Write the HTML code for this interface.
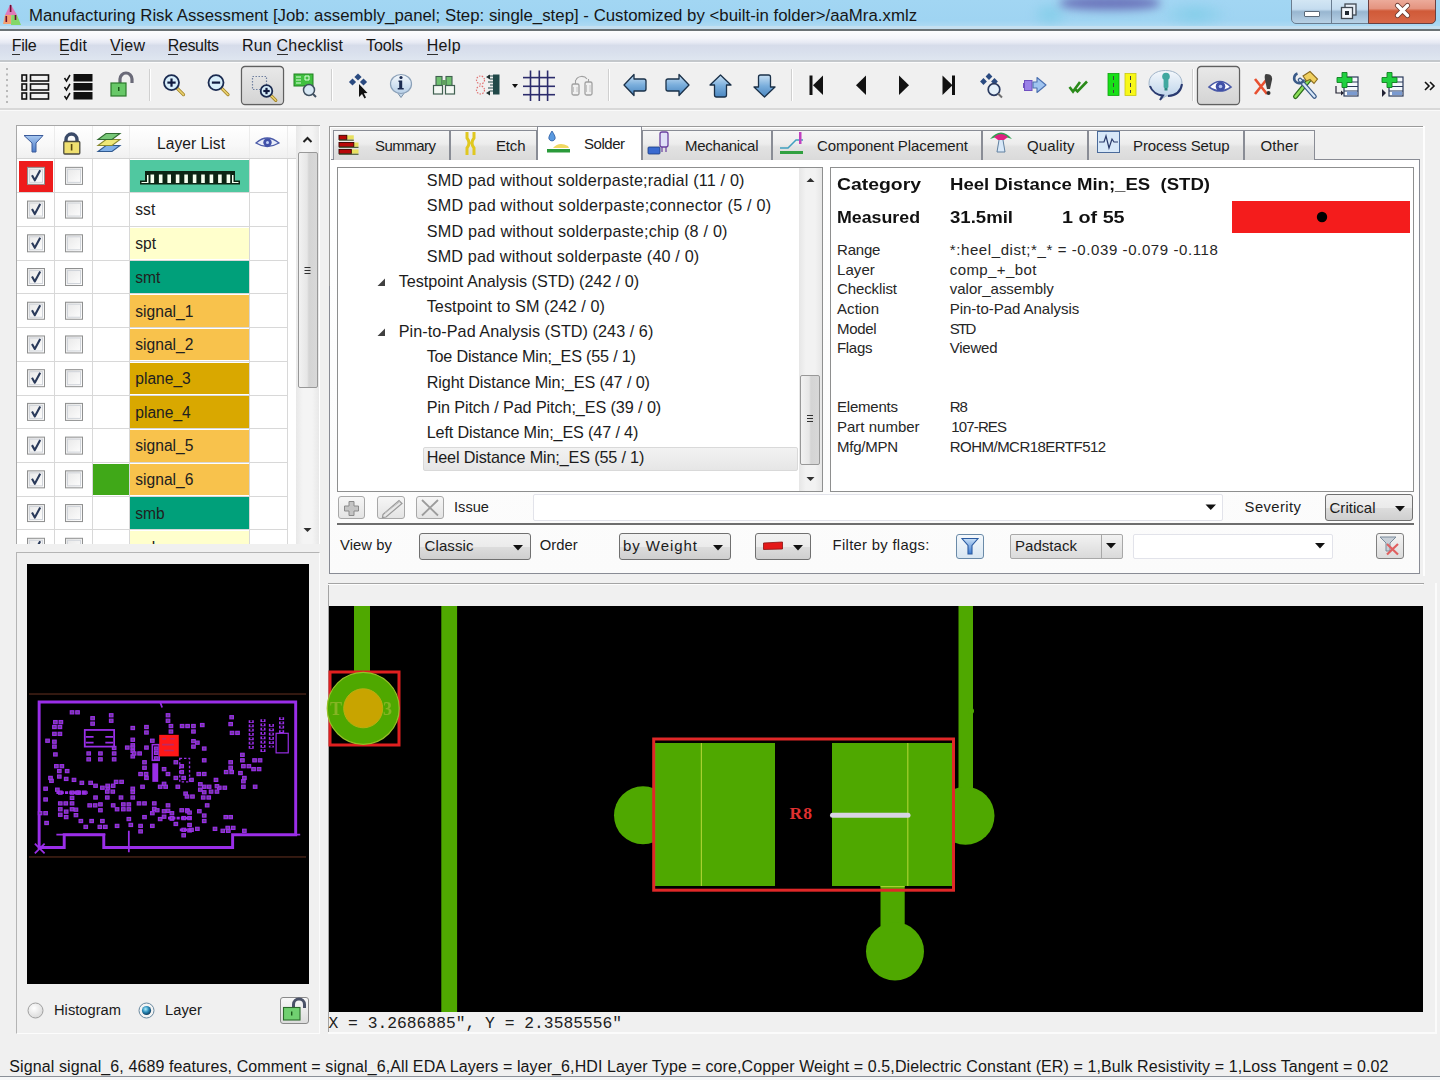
<!DOCTYPE html>
<html><head><meta charset="utf-8">
<style>
*{margin:0;padding:0;box-sizing:border-box}
html,body{width:1440px;height:1080px;overflow:hidden;background:#f0f0f0;font-family:"Liberation Sans",sans-serif;color:#1a1a1a;position:relative}
.a{position:absolute}
svg.a{overflow:visible}
.t{position:absolute;white-space:pre;line-height:1}
.u{text-decoration:underline;text-underline-offset:3px;text-decoration-thickness:1px}
</style></head><body>
<div class="a" style="left:0.0px;top:0.0px;width:1440.0px;height:29.0px;background:linear-gradient(180deg,#a2d6f3 0%,#9fd4f2 70%,#b4dcf3 100%)"></div>
<div class="a" style="left:1030.0px;top:0.0px;width:40.0px;height:29.0px;background:radial-gradient(ellipse at center,rgba(130,205,232,0.9) 0%,rgba(160,212,242,0) 70%);filter:blur(3px)"></div>
<div class="a" style="left:1160.0px;top:0.0px;width:70.0px;height:29.0px;background:radial-gradient(ellipse at center,rgba(130,205,232,0.9) 0%,rgba(160,212,242,0) 70%);filter:blur(3px)"></div>
<div class="a" style="left:1060.0px;top:-4.0px;width:100.0px;height:14.0px;background:#6a72ba;border-radius:40%;filter:blur(5px)"></div>
<div class="a" style="left:0.0px;top:26.0px;width:1440.0px;height:3.0px;background:#c4dff0"></div>
<div class="a" style="left:0.0px;top:29.0px;width:1440.0px;height:2.0px;background:#6b7275"></div>
<div class="t" style="left:29.0px;top:8.0px;font-size:16.8px;letter-spacing:0.017px;color:#161616;">Manufacturing Risk Assessment [Job: assembly_panel; Step: single_step] - Customized by &lt;built-in folder&gt;/aaMra.xmlz</div>
<svg class="a" style="left:0px;top:0px;" width="30" height="30" viewBox="0 0 30 30"><defs><filter id="blr"><feGaussianBlur stdDeviation="0.7"/></filter></defs><g filter="url(#blr)">
<path d="M10.5 4 L17 15 L5 15 Z" fill="#e07ab8"/>
<path d="M5 15 L11.5 15 L11 24 L3 24 Z" fill="#f4a070"/><path d="M11.5 15 L17 15 L21 25 L11 25 Z" fill="#84d868"/>
<path d="M10.6 5 L10.6 12 M6.3 16 L6.3 22 M15.5 15 L15.5 20" stroke="#6a1030" stroke-width="1.6"/></g></svg>
<div class="a" style="left:1291.0px;top:-3.0px;width:145.0px;height:27.0px;border:1px solid #6a7d90;border-radius:0 0 5px 5px;background:linear-gradient(180deg,#d6e8f5 0%,#c4dcef 45%,#98b6d0 55%,#b8d2e6 100%);"></div>
<div class="a" style="left:1368.0px;top:-3.0px;width:68.0px;height:27.0px;border:1px solid #6a4040;border-radius:0 0 5px 0;background:linear-gradient(180deg,#eeb0a0 0%,#e49480 42%,#d05a38 52%,#d86848 100%);"></div>
<div class="a" style="left:1331.0px;top:0.0px;width:1.0px;height:23.0px;background:#6a7d90"></div>
<div class="a" style="left:1304.0px;top:11.0px;width:16.0px;height:6.0px;background:#fff;border:1px solid #5a6878;border-radius:1px"></div>
<svg class="a" style="left:1340px;top:3px;" width="18" height="17" viewBox="0 0 18 17"><rect x="5" y="1" width="11" height="11" fill="#e8f0f8" stroke="#404850" stroke-width="1.3"/><rect x="1.5" y="4.5" width="11" height="11" fill="#f4f8fc" stroke="#404850" stroke-width="1.3"/><rect x="5" y="8" width="4" height="4" fill="#202830"/></svg>
<svg class="a" style="left:1394px;top:3px;" width="18" height="16" viewBox="0 0 18 16"><path d="M3.5 2.5 L13.5 12.5 M13.5 2.5 L3.5 12.5" stroke="#6a3a30" stroke-width="5.2" stroke-linecap="round"/><path d="M3.5 2.5 L13.5 12.5 M13.5 2.5 L3.5 12.5" stroke="#ffffff" stroke-width="3.4" stroke-linecap="round"/></svg>
<div class="a" style="left:0.0px;top:31.0px;width:1440.0px;height:29.0px;background:linear-gradient(180deg,#fdfdfe 0%,#f4f5fa 25%,#e6e9f3 40%,#d6dcea 50%,#d9e0ed 75%,#dfe6f0 100%)"></div>
<div class="a" style="left:0.0px;top:60.0px;width:1440.0px;height:2.0px;background:#c3c7cb"></div>
<div class="t" style="left:11.7px;top:37.9px;font-size:16px;letter-spacing:-0.260px;color:#161616;">File</div>
<div class="t" style="left:59.0px;top:37.9px;font-size:16px;letter-spacing:0.143px;color:#161616;">Edit</div>
<div class="t" style="left:110.0px;top:37.9px;font-size:16px;letter-spacing:0.203px;color:#161616;">View</div>
<div class="t" style="left:167.7px;top:37.9px;font-size:16px;letter-spacing:-0.342px;color:#161616;">Results</div>
<div class="t" style="left:242.0px;top:37.9px;font-size:16px;letter-spacing:0.192px;color:#161616;">Run Checklist</div>
<div class="t" style="left:366.0px;top:37.9px;font-size:16px;letter-spacing:-0.088px;color:#161616;">Tools</div>
<div class="t" style="left:426.7px;top:37.9px;font-size:16px;letter-spacing:0.365px;color:#161616;">Help</div>
<div class="a" style="left:12.0px;top:54.0px;width:8.0px;height:1.0px;background:#303030"></div>
<div class="a" style="left:59.5px;top:54.0px;width:9.0px;height:1.0px;background:#303030"></div>
<div class="a" style="left:110.5px;top:54.0px;width:11.0px;height:1.0px;background:#303030"></div>
<div class="a" style="left:168.0px;top:54.0px;width:10.0px;height:1.0px;background:#303030"></div>
<div class="a" style="left:277.0px;top:54.0px;width:11.0px;height:1.0px;background:#303030"></div>
<div class="a" style="left:427.0px;top:54.0px;width:11.0px;height:1.0px;background:#303030"></div>
<div class="a" style="left:0.0px;top:62.0px;width:1440.0px;height:1.0px;background:#fbfbfb"></div>
<div class="a" style="left:0.0px;top:108.0px;width:1440.0px;height:2.0px;background:#d8d8d8"></div>
<div class="a" style="left:0.0px;top:110.0px;width:1440.0px;height:1.0px;background:#fafafa"></div>
<div class="t" style="left:9.3px;top:1059.0px;font-size:16px;letter-spacing:0.101px;color:#161616;">Signal signal_6, 4689 features, Comment = signal_6,All EDA Layers = layer_6,HDI Layer Type = core,Copper Weight = 0.5,Dielectric Constant (ER) = 1,Bulk Resistivity = 1,Loss Tangent = 0.02</div>
<div class="a" style="left:0.0px;top:1076.0px;width:1440.0px;height:1.0px;background:#8a9098"></div>
<div class="a" style="left:0.0px;top:1077.0px;width:1440.0px;height:3.0px;background:#f6f7f8"></div>
<svg class="a" style="left:0;top:0" width="1440" height="112" viewBox="0 0 1440 112"><defs>
<linearGradient id="selg" x1="0" y1="0" x2="0" y2="1"><stop offset="0" stop-color="#e8e8e8"/><stop offset="1" stop-color="#d4d4d4"/></linearGradient>
<linearGradient id="blug" x1="0" y1="0" x2="0" y2="1"><stop offset="0" stop-color="#c8e0f4"/><stop offset="0.5" stop-color="#7aaedc"/><stop offset="1" stop-color="#4a86c0"/></linearGradient>
<linearGradient id="bubg" x1="0" y1="0" x2="0" y2="1"><stop offset="0" stop-color="#f4f8fc"/><stop offset="1" stop-color="#b8d0e8"/></linearGradient>
</defs><rect x="6" y="68.0" width="2" height="2" fill="#b8b8b8"/><rect x="6" y="73.5" width="2" height="2" fill="#b8b8b8"/><rect x="6" y="79.0" width="2" height="2" fill="#b8b8b8"/><rect x="6" y="84.5" width="2" height="2" fill="#b8b8b8"/><rect x="6" y="90.0" width="2" height="2" fill="#b8b8b8"/><rect x="6" y="95.5" width="2" height="2" fill="#b8b8b8"/><rect x="6" y="101.0" width="2" height="2" fill="#b8b8b8"/><rect x="149" y="69" width="1" height="32" fill="#d0d0d0"/><rect x="150" y="69" width="1" height="32" fill="#ffffff"/><rect x="331" y="69" width="1" height="32" fill="#d0d0d0"/><rect x="332" y="69" width="1" height="32" fill="#ffffff"/><rect x="608" y="69" width="1" height="32" fill="#d0d0d0"/><rect x="609" y="69" width="1" height="32" fill="#ffffff"/><rect x="791" y="69" width="1" height="32" fill="#d0d0d0"/><rect x="792" y="69" width="1" height="32" fill="#ffffff"/><rect x="1192" y="69" width="1" height="32" fill="#d0d0d0"/><rect x="1193" y="69" width="1" height="32" fill="#ffffff"/><rect x="22" y="75" width="4.5" height="6" fill="none" stroke="#111" stroke-width="1.6"/><rect x="30.5" y="75" width="18" height="6" fill="none" stroke="#111" stroke-width="1.6"/><rect x="22" y="84" width="4.5" height="6" fill="none" stroke="#111" stroke-width="1.6"/><rect x="30.5" y="84" width="18" height="6" fill="none" stroke="#111" stroke-width="1.6"/><rect x="22" y="93" width="4.5" height="6" fill="none" stroke="#111" stroke-width="1.6"/><rect x="30.5" y="93" width="18" height="6" fill="none" stroke="#111" stroke-width="1.6"/><path d="M64.5 78 L66.5 81 L70 75" fill="none" stroke="#111" stroke-width="1.5"/><rect x="73.5" y="74" width="19" height="7.5" fill="#111"/><path d="M64.5 87 L66.5 90 L70 84" fill="none" stroke="#111" stroke-width="1.5"/><rect x="73.5" y="83" width="19" height="7.5" fill="#111"/><path d="M64.5 96 L66.5 99 L70 93" fill="none" stroke="#111" stroke-width="1.5"/><rect x="73.5" y="92" width="19" height="7.5" fill="#111"/><path d="M120 84 L120 79 A6 6 0 0 1 132 79 L132 83" fill="none" stroke="#6a6a78" stroke-width="3.2"/><rect x="111" y="83" width="15" height="13" fill="#68c868" stroke="#2a7a2a" stroke-width="1.2"/><rect x="118" y="87" width="1.5" height="4" fill="#1a5a1a"/><line x1="176.75" y1="87.85" x2="183.5" y2="94.6" stroke="#a08020" stroke-width="3.2" stroke-linecap="round"/><line x1="176.75" y1="87.85" x2="183.5" y2="94.6" stroke="#e8d070" stroke-width="1.6" stroke-linecap="round"/><circle cx="171.5" cy="82.6" r="7.5" fill="#d8eefa" stroke="#1a2a50" stroke-width="1.8"/><rect x="167.375" y="81.5" width="8.25" height="2.2" fill="#101a40"/><rect x="170.4" y="78.475" width="2.2" height="8.25" fill="#101a40"/><line x1="221.25" y1="87.85" x2="228.0" y2="94.6" stroke="#a08020" stroke-width="3.2" stroke-linecap="round"/><line x1="221.25" y1="87.85" x2="228.0" y2="94.6" stroke="#e8d070" stroke-width="1.6" stroke-linecap="round"/><circle cx="216" cy="82.6" r="7.5" fill="#d8eefa" stroke="#1a2a50" stroke-width="1.8"/><rect x="211.875" y="81.5" width="8.25" height="2.2" fill="#101a40"/><rect x="241.5" y="66.5" width="42" height="38" rx="3.5" fill="#dcdcdc" stroke="#606060" stroke-width="1.3"/><rect x="242.5" y="67.5" width="40" height="36" rx="3" fill="url(#selg)"/><rect x="252.5" y="76.5" width="14" height="13" fill="none" stroke="#7080a0" stroke-width="1.2" stroke-dasharray="1.5 1.5"/><line x1="270.56" y1="95.06" x2="275.78" y2="100.28" stroke="#a08020" stroke-width="3.2" stroke-linecap="round"/><line x1="270.56" y1="95.06" x2="275.78" y2="100.28" stroke="#e8d070" stroke-width="1.6" stroke-linecap="round"/><circle cx="266.5" cy="91" r="5.8" fill="#d8eefa" stroke="#1a2a50" stroke-width="1.8"/><rect x="263.31" y="89.9" width="6.38" height="2.2" fill="#101a40"/><rect x="265.4" y="87.81" width="2.2" height="6.38" fill="#101a40"/><rect x="294" y="74" width="19" height="12" fill="#40c040" stroke="#208020" stroke-width="1"/><path d="M296 77 h5 M296 80 h5 M296 83 h5 M305 76 v4 h4 v-4 z" stroke="#e0ffe0" stroke-width="1" fill="none"/><circle cx="309" cy="90" r="5.5" fill="#d8e8f4" stroke="#405060" stroke-width="1.5"/><line x1="313" y1="94" x2="316" y2="97" stroke="#405060" stroke-width="2"/><path d="M352.5 78.4 L356.1 82 L352.5 85.6 L348.9 82 Z" fill="#2a4a80"/><path d="M358 73.4 L361.6 77 L358 80.6 L354.4 77 Z" fill="#2a4a80"/><path d="M363.5 78.4 L367.1 82 L363.5 85.6 L359.9 82 Z" fill="#2a4a80"/><path d="M359 84 L359 97 L362 94 L364.5 98.5 L366 97.5 L363.8 93.2 L367.5 93 Z" fill="#111"/><path d="M397 92 L401 97.5 L405 92 Z" fill="#c0d4e8" stroke="#7a90a8" stroke-width="1"/><ellipse cx="401" cy="84" rx="10.5" ry="9.5" fill="url(#bubg)" stroke="#8aa0b8" stroke-width="1.2"/><circle cx="401" cy="77.5" r="1.6" fill="#1a2a50"/><path d="M398.5 80.5 h3.7 v7.5 h1.5 v1.6 h-6 v-1.6 h1.5 v-6 h-0.7 z" fill="#1a2a50"/><rect x="436" y="76.5" width="6" height="9" fill="#70c070" stroke="#406050" stroke-width="1.1"/><rect x="446" y="76.5" width="6" height="9" fill="#70c070" stroke="#406050" stroke-width="1.1"/><rect x="433.5" y="85.5" width="9" height="8.5" fill="#f4f8f4" stroke="#406050" stroke-width="1.2"/><rect x="445.5" y="85.5" width="9" height="8.5" fill="#f4f8f4" stroke="#406050" stroke-width="1.2"/><rect x="442" y="80" width="4" height="5" fill="#60a060"/><circle cx="480.5" cy="80" r="4" fill="none" stroke="#e07070" stroke-width="1.2" stroke-dasharray="1.5 1.3"/><circle cx="480.5" cy="90" r="4" fill="none" stroke="#e07070" stroke-width="1.2" stroke-dasharray="1.5 1.3"/><rect x="493" y="74.5" width="6.5" height="20" fill="#204848"/><path d="M488 76 h5 M490 79 h3 M488 82 h5 M490 85 h3 M488 88 h5 M490 91 h3" stroke="#204848" stroke-width="1.2"/><path d="M486 77 L490 74.5 L490 79.5 Z M486 93 L490 90.5 L490 95.5 Z" fill="#203030"/><path d="M512 84 L518 84 L515 88 Z" fill="#111"/><rect x="529.7" y="70.5" width="1.6" height="30.5" fill="#2c2c6c"/><rect x="538.5" y="70.5" width="1.6" height="30.5" fill="#2c2c6c"/><rect x="546.8000000000001" y="70.5" width="1.6" height="30.5" fill="#2c2c6c"/><rect x="523" y="76.8" width="32" height="1.6" fill="#2c2c6c"/><rect x="523" y="85.5" width="32" height="1.6" fill="#2c2c6c"/><rect x="523" y="93.9" width="32" height="1.6" fill="#2c2c6c"/><rect x="572" y="84" width="7" height="11" rx="1.5" fill="none" stroke="#a0a0a0" stroke-width="1.3"/><rect x="585" y="82" width="7" height="13" rx="1.5" fill="none" stroke="#a0a0a0" stroke-width="1.3"/><path d="M575.5 84 v-4 M588.5 82 v-3 M576 80 A6 5 0 0 1 587 79" fill="none" stroke="#a0a0a0" stroke-width="1.1"/><path d="M573.5 87 v5 M577 87 v5 M586.5 85 v7 M590 85 v7" stroke="#c0c0c0" stroke-width="0.9"/><path d="M624 85 L634 74.5 L634 79 L644 79 Q646 79 646 81 L646 89 Q646 91 644 91 L634 91 L634 95.5 Z" fill="url(#blug)" stroke="#1a3048" stroke-width="1.3" stroke-linejoin="round"/><path d="M689 85 L679 74.5 L679 79 L668 79 Q666 79 666 81 L666 89 Q666 91 668 91 L679 91 L679 95.5 Z" fill="url(#blug)" stroke="#1a3048" stroke-width="1.3" stroke-linejoin="round"/><path d="M720.5 75 L731.0 85 L726.5 85 L726.5 95 Q726.5 97 724.5 97 L716.5 97 Q714.5 97 714.5 95 L714.5 85 L710.0 85 Z" fill="url(#blug)" stroke="#1a3048" stroke-width="1.3" stroke-linejoin="round"/><path d="M764.5 97 L775.0 87 L770.5 87 L770.5 77 Q770.5 75 768.5 75 L760.5 75 Q758.5 75 758.5 77 L758.5 87 L754.0 87 Z" fill="url(#blug)" stroke="#1a3048" stroke-width="1.3" stroke-linejoin="round"/><rect x="809.5" y="75.5" width="3" height="19.5" fill="#111"/><path d="M823 75.5 L813 85.2 L823 95 Z" fill="#111"/><path d="M866 75.5 L856 85.2 L866 95 Z" fill="#111"/><path d="M899 75.5 L909 85.2 L899 95 Z" fill="#111"/><path d="M942.5 75.5 L952.5 85.2 L942.5 95 Z" fill="#111"/><rect x="952" y="75.5" width="3" height="19.5" fill="#111"/><path d="M983.5 78.1 L986.9 81.5 L983.5 84.9 L980.1 81.5 Z" fill="#2a4a80"/><path d="M989 73.1 L992.4 76.5 L989 79.9 L985.6 76.5 Z" fill="#2a4a80"/><path d="M994.5 78.1 L997.9 81.5 L994.5 84.9 L991.1 81.5 Z" fill="#2a4a80"/><circle cx="994" cy="89.5" r="5.8" fill="#e4f0fa" stroke="#2a3a60" stroke-width="1.7"/><line x1="998" y1="93.5" x2="1002" y2="97.5" stroke="#707070" stroke-width="2"/><rect x="1024.5" y="80.5" width="7.5" height="10" fill="#9a80e8" stroke="#7050c0" stroke-width="1"/><rect x="1023" y="83" width="2" height="5" fill="#7050c0"/><path d="M1033 82 h4 v-4.5 l9 7.5 l-9 7.5 v-4.5 h-4 z" fill="#a0c4f0" stroke="#4a70b0" stroke-width="1.1" stroke-linejoin="round"/><path d="M1069.5 87 L1073 91.5 L1080 82 M1075 89 L1077.5 91.5 L1087 81.5" fill="none" stroke="#2a8a1a" stroke-width="2.6"/><rect x="1108" y="73.5" width="11" height="22" fill="#18e018" stroke="#10a010" stroke-width="0.8"/><rect x="1125" y="73.5" width="11" height="22" fill="#f8f818" stroke="#c8c810" stroke-width="0.8"/><path d="M1113.5 76 v4 M1113.5 83 v4 M1113.5 90 v3 M1130.5 76 v4 M1130.5 83 v4 M1130.5 90 v3" stroke="#404040" stroke-width="1"/><path d="M1165.5 70.5 C1176 70.5 1182 76 1182 83.5 C1182 91 1175 96 1166 96 L1160 100 L1161 95 C1154 93 1149 89 1149 83.5 C1149 76 1155 70.5 1165.5 70.5 Z" fill="url(#bubg)" stroke="#a0b4c8" stroke-width="1"/><path d="M1150 86 C1152 92 1158 95 1163 95.5 L1160 100 M1168 96 C1176 95.5 1181 91 1182 84" fill="none" stroke="#2a3a70" stroke-width="2"/><circle cx="1166" cy="76.5" r="3.8" fill="#40a8a0"/><rect x="1163.6" y="79" width="4.8" height="9" rx="1" fill="#40a8a0"/><rect x="1164.5" y="88" width="3" height="2.5" fill="#2a8880"/><rect x="1197.5" y="66.5" width="42" height="38" rx="3.5" fill="#dcdcdc" stroke="#606060" stroke-width="1.3"/><rect x="1198.5" y="67.5" width="40" height="36" rx="3" fill="url(#selg)"/><path d="M1209 87 Q1220 76 1231 87 Q1220 95 1209 87 Z" fill="#ffffff" stroke="#4a5aa8" stroke-width="1.6"/><circle cx="1220.5" cy="86.5" r="4.8" fill="#4050a8"/><circle cx="1220.5" cy="86.5" r="1.8" fill="#b0c0f0"/><path d="M1255 79 L1267 94 M1267 79 L1255 94" stroke="#e85030" stroke-width="2.6"/><path d="M1266 74 Q1273 74 1272 80 L1270 89 L1267 89 L1265 80 Q1264 74 1266 74 Z" fill="#404040"/><circle cx="1268.5" cy="93" r="2" fill="#303030"/><path d="M1295.5 96.5 L1309 80" stroke="#2a6a1a" stroke-width="5" stroke-linecap="round"/><path d="M1295.5 96.5 L1309 80" stroke="#8ee05a" stroke-width="2.6" stroke-linecap="round"/><path d="M1303 76 L1310 71.5 L1317.5 79 L1314 83.5 L1310 79.5 L1306.5 81 Z" fill="#f0d060" stroke="#8a6a20" stroke-width="1.1"/><path d="M1300 80 L1314.5 96.5" stroke="#3a5a88" stroke-width="4.6" stroke-linecap="round"/><path d="M1300 80 L1314.5 96.5" stroke="#d8e8f8" stroke-width="2.2" stroke-linecap="round"/><path d="M1297.5 73.5 A5 5 0 1 0 1304 79.5" fill="none" stroke="#3a5a88" stroke-width="2.6"/><rect x="1344" y="77" width="14" height="19" fill="#f4f8fc" stroke="#2a3a5a" stroke-width="1.2"/><path d="M1344 82 h14 M1344 86.5 h14 M1344 91 h14" stroke="#2a3a5a" stroke-width="1"/><rect x="1347" y="91.5" width="10" height="3.5" fill="#7a9ad0"/><path d="M1342 72.5 h5 v5 h5 v5 h-5 v5 h-5 v-5 h-5 v-5 h5 z" fill="#20d040" stroke="#108020" stroke-width="0.9"/><path d="M1336 86 v7 h5" fill="none" stroke="#223" stroke-width="1.2"/><path d="M1341 90.5 L1344 93 L1341 95.5 Z" fill="#223"/><rect x="1389" y="77" width="14" height="19" fill="#f4f8fc" stroke="#2a3a5a" stroke-width="1.2"/><path d="M1389 82 h14 M1389 86.5 h14 M1389 91 h14" stroke="#2a3a5a" stroke-width="1"/><rect x="1392" y="91.5" width="10" height="3.5" fill="#7a9ad0"/><path d="M1387 72.5 h5 v5 h5 v5 h-5 v5 h-5 v-5 h-5 v-5 h5 z" fill="#20d040" stroke="#108020" stroke-width="0.9"/><path d="M1382 89 L1386 93 L1382 97 Z" fill="#223"/><path d="M1425 82 L1429 86 L1425 90 M1430 82 L1434 86 L1430 90" fill="none" stroke="#111" stroke-width="1.6"/></svg>
<div class="a" style="left:16.0px;top:125.0px;width:304.0px;height:420.0px;background:#fff;border-left:1px solid #a8a8a8;border-top:1px solid #a8a8a8;"></div>
<div class="a" style="left:17.0px;top:126.0px;width:280.0px;height:32.0px;background:linear-gradient(180deg,#ffffff 0%,#f8f8f8 60%,#f0f0f0 100%)"></div>
<div class="a" style="left:17.0px;top:158.0px;width:280.0px;height:1.0px;background:#d4d4d4"></div>
<div class="a" style="left:130.4px;top:160.2px;width:118.2px;height:31.7px;background:#50c8a0"></div>
<div class="a" style="left:18.7px;top:160.6px;width:34.5px;height:31.1px;background:#ee1c1c"></div>
<div class="a" style="left:130.4px;top:227.6px;width:118.2px;height:31.7px;background:#ffffcc"></div>
<div class="a" style="left:130.4px;top:261.4px;width:118.2px;height:31.7px;background:#00a07a"></div>
<div class="a" style="left:130.4px;top:295.1px;width:118.2px;height:31.7px;background:#f8c24c"></div>
<div class="a" style="left:130.4px;top:328.8px;width:118.2px;height:31.7px;background:#f8c24c"></div>
<div class="a" style="left:130.4px;top:362.5px;width:118.2px;height:31.7px;background:#d9a800"></div>
<div class="a" style="left:130.4px;top:396.2px;width:118.2px;height:31.7px;background:#d9a800"></div>
<div class="a" style="left:130.4px;top:430.0px;width:118.2px;height:31.7px;background:#f8c24c"></div>
<div class="a" style="left:130.4px;top:463.7px;width:118.2px;height:31.7px;background:#f8c24c"></div>
<div class="a" style="left:93.0px;top:463.7px;width:36.0px;height:31.7px;background:#40a818"></div>
<div class="a" style="left:130.4px;top:497.4px;width:118.2px;height:31.7px;background:#00a07a"></div>
<div class="a" style="left:130.4px;top:531.1px;width:118.2px;height:12.9px;background:#ffffcc"></div>
<div class="a" style="left:53.6px;top:126.0px;width:1.0px;height:32.0px;background:#ececec"></div>
<div class="a" style="left:53.6px;top:159.0px;width:1.0px;height:385.0px;background:#d8d8d8"></div>
<div class="a" style="left:92.0px;top:126.0px;width:1.0px;height:32.0px;background:#ececec"></div>
<div class="a" style="left:92.0px;top:159.0px;width:1.0px;height:385.0px;background:#d8d8d8"></div>
<div class="a" style="left:129.4px;top:126.0px;width:1.0px;height:32.0px;background:#ececec"></div>
<div class="a" style="left:129.4px;top:159.0px;width:1.0px;height:385.0px;background:#d8d8d8"></div>
<div class="a" style="left:249.0px;top:126.0px;width:1.0px;height:32.0px;background:#ececec"></div>
<div class="a" style="left:249.0px;top:159.0px;width:1.0px;height:385.0px;background:#d8d8d8"></div>
<div class="a" style="left:287.4px;top:126.0px;width:1.0px;height:32.0px;background:#ececec"></div>
<div class="a" style="left:287.4px;top:159.0px;width:1.0px;height:385.0px;background:#d8d8d8"></div>
<div class="a" style="left:17.0px;top:192.2px;width:271.0px;height:1.0px;background:#d8d8d8"></div>
<div class="a" style="left:17.0px;top:225.9px;width:271.0px;height:1.0px;background:#d8d8d8"></div>
<div class="a" style="left:17.0px;top:259.7px;width:271.0px;height:1.0px;background:#d8d8d8"></div>
<div class="a" style="left:17.0px;top:293.4px;width:271.0px;height:1.0px;background:#d8d8d8"></div>
<div class="a" style="left:17.0px;top:327.1px;width:271.0px;height:1.0px;background:#d8d8d8"></div>
<div class="a" style="left:17.0px;top:360.8px;width:271.0px;height:1.0px;background:#d8d8d8"></div>
<div class="a" style="left:17.0px;top:394.5px;width:271.0px;height:1.0px;background:#d8d8d8"></div>
<div class="a" style="left:17.0px;top:428.3px;width:271.0px;height:1.0px;background:#d8d8d8"></div>
<div class="a" style="left:17.0px;top:462.0px;width:271.0px;height:1.0px;background:#d8d8d8"></div>
<div class="a" style="left:17.0px;top:495.7px;width:271.0px;height:1.0px;background:#d8d8d8"></div>
<div class="a" style="left:17.0px;top:529.4px;width:271.0px;height:1.0px;background:#d8d8d8"></div>
<svg class="a" style="left:0;top:0;overflow:hidden" width="320" height="545" viewBox="0 0 320 545"><rect x="27.5" y="167.36" width="17" height="17" fill="url(#cbg)" stroke="#8e8f8f" stroke-width="1"/><rect x="29.5" y="169.36" width="13" height="13" fill="none" stroke="#d0d4da" stroke-width="1"/><path d="M32 175.36 L34.8 180.36 L40.2 170.36" fill="none" stroke="#2a3a5a" stroke-width="2.1" stroke-linejoin="round"/><rect x="65.5" y="167.36" width="17" height="17" fill="url(#cbg)" stroke="#8e8f8f" stroke-width="1"/><rect x="67.5" y="169.36" width="13" height="13" fill="none" stroke="#d0d4da" stroke-width="1"/><rect x="27.5" y="201.07999999999998" width="17" height="17" fill="url(#cbg)" stroke="#8e8f8f" stroke-width="1"/><rect x="29.5" y="203.07999999999998" width="13" height="13" fill="none" stroke="#d0d4da" stroke-width="1"/><path d="M32 209.07999999999998 L34.8 214.07999999999998 L40.2 204.07999999999998" fill="none" stroke="#2a3a5a" stroke-width="2.1" stroke-linejoin="round"/><rect x="65.5" y="201.07999999999998" width="17" height="17" fill="url(#cbg)" stroke="#8e8f8f" stroke-width="1"/><rect x="67.5" y="203.07999999999998" width="13" height="13" fill="none" stroke="#d0d4da" stroke-width="1"/><rect x="27.5" y="234.8" width="17" height="17" fill="url(#cbg)" stroke="#8e8f8f" stroke-width="1"/><rect x="29.5" y="236.8" width="13" height="13" fill="none" stroke="#d0d4da" stroke-width="1"/><path d="M32 242.8 L34.8 247.8 L40.2 237.8" fill="none" stroke="#2a3a5a" stroke-width="2.1" stroke-linejoin="round"/><rect x="65.5" y="234.8" width="17" height="17" fill="url(#cbg)" stroke="#8e8f8f" stroke-width="1"/><rect x="67.5" y="236.8" width="13" height="13" fill="none" stroke="#d0d4da" stroke-width="1"/><rect x="27.5" y="268.52" width="17" height="17" fill="url(#cbg)" stroke="#8e8f8f" stroke-width="1"/><rect x="29.5" y="270.52" width="13" height="13" fill="none" stroke="#d0d4da" stroke-width="1"/><path d="M32 276.52 L34.8 281.52 L40.2 271.52" fill="none" stroke="#2a3a5a" stroke-width="2.1" stroke-linejoin="round"/><rect x="65.5" y="268.52" width="17" height="17" fill="url(#cbg)" stroke="#8e8f8f" stroke-width="1"/><rect x="67.5" y="270.52" width="13" height="13" fill="none" stroke="#d0d4da" stroke-width="1"/><rect x="27.5" y="302.24" width="17" height="17" fill="url(#cbg)" stroke="#8e8f8f" stroke-width="1"/><rect x="29.5" y="304.24" width="13" height="13" fill="none" stroke="#d0d4da" stroke-width="1"/><path d="M32 310.24 L34.8 315.24 L40.2 305.24" fill="none" stroke="#2a3a5a" stroke-width="2.1" stroke-linejoin="round"/><rect x="65.5" y="302.24" width="17" height="17" fill="url(#cbg)" stroke="#8e8f8f" stroke-width="1"/><rect x="67.5" y="304.24" width="13" height="13" fill="none" stroke="#d0d4da" stroke-width="1"/><rect x="27.5" y="335.96000000000004" width="17" height="17" fill="url(#cbg)" stroke="#8e8f8f" stroke-width="1"/><rect x="29.5" y="337.96000000000004" width="13" height="13" fill="none" stroke="#d0d4da" stroke-width="1"/><path d="M32 343.96000000000004 L34.8 348.96000000000004 L40.2 338.96000000000004" fill="none" stroke="#2a3a5a" stroke-width="2.1" stroke-linejoin="round"/><rect x="65.5" y="335.96000000000004" width="17" height="17" fill="url(#cbg)" stroke="#8e8f8f" stroke-width="1"/><rect x="67.5" y="337.96000000000004" width="13" height="13" fill="none" stroke="#d0d4da" stroke-width="1"/><rect x="27.5" y="369.68" width="17" height="17" fill="url(#cbg)" stroke="#8e8f8f" stroke-width="1"/><rect x="29.5" y="371.68" width="13" height="13" fill="none" stroke="#d0d4da" stroke-width="1"/><path d="M32 377.68 L34.8 382.68 L40.2 372.68" fill="none" stroke="#2a3a5a" stroke-width="2.1" stroke-linejoin="round"/><rect x="65.5" y="369.68" width="17" height="17" fill="url(#cbg)" stroke="#8e8f8f" stroke-width="1"/><rect x="67.5" y="371.68" width="13" height="13" fill="none" stroke="#d0d4da" stroke-width="1"/><rect x="27.5" y="403.4" width="17" height="17" fill="url(#cbg)" stroke="#8e8f8f" stroke-width="1"/><rect x="29.5" y="405.4" width="13" height="13" fill="none" stroke="#d0d4da" stroke-width="1"/><path d="M32 411.4 L34.8 416.4 L40.2 406.4" fill="none" stroke="#2a3a5a" stroke-width="2.1" stroke-linejoin="round"/><rect x="65.5" y="403.4" width="17" height="17" fill="url(#cbg)" stroke="#8e8f8f" stroke-width="1"/><rect x="67.5" y="405.4" width="13" height="13" fill="none" stroke="#d0d4da" stroke-width="1"/><rect x="27.5" y="437.12" width="17" height="17" fill="url(#cbg)" stroke="#8e8f8f" stroke-width="1"/><rect x="29.5" y="439.12" width="13" height="13" fill="none" stroke="#d0d4da" stroke-width="1"/><path d="M32 445.12 L34.8 450.12 L40.2 440.12" fill="none" stroke="#2a3a5a" stroke-width="2.1" stroke-linejoin="round"/><rect x="65.5" y="437.12" width="17" height="17" fill="url(#cbg)" stroke="#8e8f8f" stroke-width="1"/><rect x="67.5" y="439.12" width="13" height="13" fill="none" stroke="#d0d4da" stroke-width="1"/><rect x="27.5" y="470.84000000000003" width="17" height="17" fill="url(#cbg)" stroke="#8e8f8f" stroke-width="1"/><rect x="29.5" y="472.84000000000003" width="13" height="13" fill="none" stroke="#d0d4da" stroke-width="1"/><path d="M32 478.84000000000003 L34.8 483.84000000000003 L40.2 473.84000000000003" fill="none" stroke="#2a3a5a" stroke-width="2.1" stroke-linejoin="round"/><rect x="65.5" y="470.84000000000003" width="17" height="17" fill="url(#cbg)" stroke="#8e8f8f" stroke-width="1"/><rect x="67.5" y="472.84000000000003" width="13" height="13" fill="none" stroke="#d0d4da" stroke-width="1"/><rect x="27.5" y="504.55999999999995" width="17" height="17" fill="url(#cbg)" stroke="#8e8f8f" stroke-width="1"/><rect x="29.5" y="506.55999999999995" width="13" height="13" fill="none" stroke="#d0d4da" stroke-width="1"/><path d="M32 512.56 L34.8 517.56 L40.2 507.55999999999995" fill="none" stroke="#2a3a5a" stroke-width="2.1" stroke-linejoin="round"/><rect x="65.5" y="504.55999999999995" width="17" height="17" fill="url(#cbg)" stroke="#8e8f8f" stroke-width="1"/><rect x="67.5" y="506.55999999999995" width="13" height="13" fill="none" stroke="#d0d4da" stroke-width="1"/><rect x="27.5" y="538.28" width="17" height="17" fill="url(#cbg)" stroke="#8e8f8f" stroke-width="1"/><rect x="29.5" y="540.28" width="13" height="13" fill="none" stroke="#d0d4da" stroke-width="1"/><path d="M32 546.28 L34.8 551.28 L40.2 541.28" fill="none" stroke="#2a3a5a" stroke-width="2.1" stroke-linejoin="round"/><rect x="65.5" y="538.28" width="17" height="17" fill="url(#cbg)" stroke="#8e8f8f" stroke-width="1"/><rect x="67.5" y="540.28" width="13" height="13" fill="none" stroke="#d0d4da" stroke-width="1"/><path d="M24 135.5 L43 135.5 L36 143 L36 152 L32 152 L32 143 Z" fill="url(#fung)" stroke="#3a5a9a" stroke-width="1"/><path d="M66 142 L66 139.5 A5.5 5.5 0 0 1 77 139.5 L77 142" fill="none" stroke="#3a4a68" stroke-width="3.4"/><circle cx="71.5" cy="139" r="1.2" fill="#f8f8f8"/><rect x="63.8" y="141.5" width="16" height="12.5" rx="1" fill="#f0e070" stroke="#4a4a40" stroke-width="1.3"/><rect x="70.8" y="144" width="1.6" height="6.5" fill="#5a4a10"/><path d="M98 151.5 L112 151.5 L120 145.5 L106 145.5 Z" fill="#80b0e8" stroke="#305a90" stroke-width="1.1"/><path d="M98 145.5 L112 145.5 L120 139.5 L106 139.5 Z" fill="#f0e878" stroke="#8a8a30" stroke-width="1.1"/><path d="M98 139.5 L112 139.5 L120 133.5 L106 133.5 Z" fill="#78c878" stroke="#306a30" stroke-width="1.1"/><path d="M256 143 Q267 133 279 143 Q267 150 256 143 Z" fill="#e8ecf8" stroke="#4a5aa8" stroke-width="1.3"/><circle cx="267.5" cy="142.5" r="4.2" fill="#4050a8"/><circle cx="267.5" cy="142.5" r="1.5" fill="#c0d0f8"/><defs>
<linearGradient id="cbg" x1="0" y1="0" x2="1" y2="1"><stop offset="0" stop-color="#e6e6e6"/><stop offset="1" stop-color="#ffffff"/></linearGradient>
<linearGradient id="fung" x1="0" y1="0" x2="0" y2="1"><stop offset="0" stop-color="#a8c8f0"/><stop offset="1" stop-color="#4a7ac8"/></linearGradient>
</defs><path d="M140 184.5 L140 180.5 L145 180.5 L145 171 L235 171 L235 180.5 L240 180.5 L240 184.5 Z" fill="#0c2414"/><path d="M141.5 183 L141.5 182 L147 182 L147 175 L148.5 175 L148.5 183 Z" fill="#f4fff0"/><path d="M232 175 L233.5 175 L233.5 182 L238.5 182 L238.5 183 L232 183 Z" fill="#f4fff0"/><rect x="150.5" y="174.5" width="3.6" height="8.5" fill="#f6fff0"/><rect x="158.9" y="174.5" width="3.6" height="8.5" fill="#f6fff0"/><rect x="167.4" y="174.5" width="3.6" height="8.5" fill="#f6fff0"/><rect x="175.8" y="174.5" width="3.6" height="8.5" fill="#f6fff0"/><rect x="184.3" y="174.5" width="3.6" height="8.5" fill="#f6fff0"/><rect x="192.8" y="174.5" width="3.6" height="8.5" fill="#f6fff0"/><rect x="201.2" y="174.5" width="3.6" height="8.5" fill="#f6fff0"/><rect x="209.6" y="174.5" width="3.6" height="8.5" fill="#f6fff0"/><rect x="218.1" y="174.5" width="3.6" height="8.5" fill="#f6fff0"/><rect x="226.6" y="174.5" width="3.6" height="8.5" fill="#f6fff0"/></svg>
<div class="t" style="left:157.0px;top:136.1px;font-size:15.6px;letter-spacing:0.041px;color:#1a1a1a;">Layer List</div>
<div class="t" style="left:135.3px;top:202.3px;font-size:15.6px;color:#202020;">sst</div>
<div class="t" style="left:135.3px;top:236.0px;font-size:15.6px;color:#202020;">spt</div>
<div class="t" style="left:135.3px;top:269.8px;font-size:15.6px;color:#202020;">smt</div>
<div class="t" style="left:135.3px;top:303.5px;font-size:15.6px;color:#202020;">signal_1</div>
<div class="t" style="left:135.3px;top:337.2px;font-size:15.6px;color:#202020;">signal_2</div>
<div class="t" style="left:135.3px;top:370.9px;font-size:15.6px;color:#202020;">plane_3</div>
<div class="t" style="left:135.3px;top:404.6px;font-size:15.6px;color:#202020;">plane_4</div>
<div class="t" style="left:135.3px;top:438.4px;font-size:15.6px;color:#202020;">signal_5</div>
<div class="t" style="left:135.3px;top:472.1px;font-size:15.6px;color:#202020;">signal_6</div>
<div class="t" style="left:135.3px;top:505.8px;font-size:15.6px;color:#202020;">smb</div>
<div class="t" style="left:135.3px;top:539.5px;font-size:15.6px;color:#202020;">spb</div>
<div class="a" style="left:16.0px;top:544.0px;width:304.0px;height:8.0px;background:#f0f0f0"></div>
<div class="a" style="left:296.0px;top:126.0px;width:23.0px;height:418.0px;background:linear-gradient(90deg,#e8e8e8 0%,#f4f4f4 30%,#f4f4f4 70%,#e8e8e8 100%)"></div>
<div class="a" style="left:297.5px;top:152.0px;width:20.0px;height:236.0px;border:1px solid #989898;border-radius:2px;background:linear-gradient(90deg,#f2f2f2 0%,#e6e6e6 45%,#d4d4d4 55%,#d8d8d8 100%)"></div>
<svg class="a" style="left:296px;top:126px;" width="23" height="418" viewBox="0 0 23 418"><path d="M7.5 16 L11.5 12 L15.5 16" fill="none" stroke="#202020" stroke-width="2"/><path d="M7.5 402 L11.5 406 L15.5 402 Z" fill="#303030"/><path d="M8.5 141.5 h6 M8.5 144.5 h6 M8.5 147.5 h6" stroke="#303030" stroke-width="1.2"/></svg>
<div class="a" style="left:16.0px;top:552.0px;width:304.0px;height:482.0px;border:1px solid #b4b4b4;border-right-color:#fcfcfc;border-bottom-color:#fcfcfc;background:#f0f0f0"></div>
<div class="a" style="left:27.0px;top:564.0px;width:282.0px;height:420.0px;background:#000"></div>
<svg class="a" style="left:27px;top:680px;overflow:hidden" width="282" height="190" viewBox="0 0 1440 970"><rect x="10" y="68" width="1415" height="7" fill="#4a2418"/><rect x="10" y="900" width="1415" height="7" fill="#4a2418"/><path d="M62 855 L62 112 L1372 112 L1372 790 L1050 790 L1050 855 L392 855 L392 790 L190 790 L190 855 Z" fill="none" stroke="#9a2ee8" stroke-width="15"/><path d="M150 790 L400 790 M1372 790 L1395 790 M40 835 L90 885 M40 885 L90 835 M520 770 L520 880 M680 112 L690 140" stroke="#9a2ee8" stroke-width="9"/><rect x="221" y="157" width="18" height="16" fill="#6a4090" stroke="#9a2ee8" stroke-width="6"/><rect x="249" y="157" width="18" height="16" fill="#6a4090" stroke="#9a2ee8" stroke-width="6"/><rect x="326" y="187" width="18" height="16" fill="#6a4090" stroke="#9a2ee8" stroke-width="6"/><rect x="326" y="215" width="18" height="16" fill="#6a4090" stroke="#9a2ee8" stroke-width="6"/><rect x="421" y="172" width="18" height="16" fill="#6a4090" stroke="#9a2ee8" stroke-width="6"/><rect x="421" y="200" width="18" height="16" fill="#6a4090" stroke="#9a2ee8" stroke-width="6"/><rect x="711" y="172" width="18" height="16" fill="#6a4090" stroke="#9a2ee8" stroke-width="6"/><rect x="711" y="200" width="18" height="16" fill="#6a4090" stroke="#9a2ee8" stroke-width="6"/><rect x="531" y="237" width="18" height="16" fill="#6a4090" stroke="#9a2ee8" stroke-width="6"/><rect x="601" y="232" width="18" height="16" fill="#6a4090" stroke="#9a2ee8" stroke-width="6"/><rect x="601" y="260" width="18" height="16" fill="#6a4090" stroke="#9a2ee8" stroke-width="6"/><rect x="726" y="227" width="18" height="16" fill="#6a4090" stroke="#9a2ee8" stroke-width="6"/><rect x="726" y="255" width="18" height="16" fill="#6a4090" stroke="#9a2ee8" stroke-width="6"/><rect x="811" y="227" width="18" height="16" fill="#6a4090" stroke="#9a2ee8" stroke-width="6"/><rect x="783" y="227" width="18" height="16" fill="#6a4090" stroke="#9a2ee8" stroke-width="6"/><rect x="841" y="227" width="18" height="16" fill="#6a4090" stroke="#9a2ee8" stroke-width="6"/><rect x="841" y="255" width="18" height="16" fill="#6a4090" stroke="#9a2ee8" stroke-width="6"/><rect x="886" y="222" width="18" height="16" fill="#6a4090" stroke="#9a2ee8" stroke-width="6"/><rect x="1036" y="182" width="18" height="16" fill="#6a4090" stroke="#9a2ee8" stroke-width="6"/><rect x="1031" y="217" width="18" height="16" fill="#6a4090" stroke="#9a2ee8" stroke-width="6"/><rect x="1066" y="262" width="18" height="16" fill="#6a4090" stroke="#9a2ee8" stroke-width="6"/><rect x="1038" y="262" width="18" height="16" fill="#6a4090" stroke="#9a2ee8" stroke-width="6"/><rect x="136" y="207" width="18" height="16" fill="#6a4090" stroke="#9a2ee8" stroke-width="6"/><rect x="164" y="207" width="18" height="16" fill="#6a4090" stroke="#9a2ee8" stroke-width="6"/><rect x="131" y="232" width="18" height="16" fill="#6a4090" stroke="#9a2ee8" stroke-width="6"/><rect x="159" y="232" width="18" height="16" fill="#6a4090" stroke="#9a2ee8" stroke-width="6"/><rect x="131" y="267" width="18" height="16" fill="#6a4090" stroke="#9a2ee8" stroke-width="6"/><rect x="159" y="267" width="18" height="16" fill="#6a4090" stroke="#9a2ee8" stroke-width="6"/><rect x="96" y="302" width="18" height="16" fill="#6a4090" stroke="#9a2ee8" stroke-width="6"/><rect x="131" y="307" width="18" height="16" fill="#6a4090" stroke="#9a2ee8" stroke-width="6"/><rect x="131" y="332" width="18" height="16" fill="#6a4090" stroke="#9a2ee8" stroke-width="6"/><rect x="136" y="372" width="18" height="16" fill="#6a4090" stroke="#9a2ee8" stroke-width="6"/><rect x="141" y="432" width="18" height="16" fill="#6a4090" stroke="#9a2ee8" stroke-width="6"/><rect x="169" y="432" width="18" height="16" fill="#6a4090" stroke="#9a2ee8" stroke-width="6"/><rect x="156" y="457" width="18" height="16" fill="#6a4090" stroke="#9a2ee8" stroke-width="6"/><rect x="156" y="485" width="18" height="16" fill="#6a4090" stroke="#9a2ee8" stroke-width="6"/><rect x="196" y="457" width="18" height="16" fill="#6a4090" stroke="#9a2ee8" stroke-width="6"/><rect x="116" y="507" width="18" height="16" fill="#6a4090" stroke="#9a2ee8" stroke-width="6"/><rect x="191" y="497" width="18" height="16" fill="#6a4090" stroke="#9a2ee8" stroke-width="6"/><rect x="231" y="502" width="18" height="16" fill="#6a4090" stroke="#9a2ee8" stroke-width="6"/><rect x="271" y="517" width="18" height="16" fill="#6a4090" stroke="#9a2ee8" stroke-width="6"/><rect x="316" y="517" width="18" height="16" fill="#6a4090" stroke="#9a2ee8" stroke-width="6"/><rect x="341" y="532" width="18" height="16" fill="#6a4090" stroke="#9a2ee8" stroke-width="6"/><rect x="376" y="542" width="18" height="16" fill="#6a4090" stroke="#9a2ee8" stroke-width="6"/><rect x="404" y="542" width="18" height="16" fill="#6a4090" stroke="#9a2ee8" stroke-width="6"/><rect x="306" y="367" width="18" height="16" fill="#6a4090" stroke="#9a2ee8" stroke-width="6"/><rect x="366" y="367" width="18" height="16" fill="#6a4090" stroke="#9a2ee8" stroke-width="6"/><rect x="436" y="367" width="18" height="16" fill="#6a4090" stroke="#9a2ee8" stroke-width="6"/><rect x="436" y="339" width="18" height="16" fill="#6a4090" stroke="#9a2ee8" stroke-width="6"/><rect x="306" y="397" width="18" height="16" fill="#6a4090" stroke="#9a2ee8" stroke-width="6"/><rect x="366" y="397" width="18" height="16" fill="#6a4090" stroke="#9a2ee8" stroke-width="6"/><rect x="436" y="397" width="18" height="16" fill="#6a4090" stroke="#9a2ee8" stroke-width="6"/><rect x="531" y="297" width="18" height="16" fill="#6a4090" stroke="#9a2ee8" stroke-width="6"/><rect x="531" y="325" width="18" height="16" fill="#6a4090" stroke="#9a2ee8" stroke-width="6"/><rect x="531" y="337" width="18" height="16" fill="#6a4090" stroke="#9a2ee8" stroke-width="6"/><rect x="503" y="337" width="18" height="16" fill="#6a4090" stroke="#9a2ee8" stroke-width="6"/><rect x="531" y="382" width="18" height="16" fill="#6a4090" stroke="#9a2ee8" stroke-width="6"/><rect x="531" y="354" width="18" height="16" fill="#6a4090" stroke="#9a2ee8" stroke-width="6"/><rect x="566" y="367" width="18" height="16" fill="#6a4090" stroke="#9a2ee8" stroke-width="6"/><rect x="538" y="367" width="18" height="16" fill="#6a4090" stroke="#9a2ee8" stroke-width="6"/><rect x="591" y="412" width="18" height="16" fill="#6a4090" stroke="#9a2ee8" stroke-width="6"/><rect x="591" y="440" width="18" height="16" fill="#6a4090" stroke="#9a2ee8" stroke-width="6"/><rect x="601" y="337" width="18" height="16" fill="#6a4090" stroke="#9a2ee8" stroke-width="6"/><rect x="631" y="302" width="18" height="16" fill="#6a4090" stroke="#9a2ee8" stroke-width="6"/><rect x="651" y="342" width="18" height="16" fill="#6a4090" stroke="#9a2ee8" stroke-width="6"/><rect x="651" y="392" width="18" height="16" fill="#6a4090" stroke="#9a2ee8" stroke-width="6"/><rect x="651" y="364" width="18" height="16" fill="#6a4090" stroke="#9a2ee8" stroke-width="6"/><rect x="691" y="447" width="18" height="16" fill="#6a4090" stroke="#9a2ee8" stroke-width="6"/><rect x="711" y="472" width="18" height="16" fill="#6a4090" stroke="#9a2ee8" stroke-width="6"/><rect x="751" y="412" width="18" height="16" fill="#6a4090" stroke="#9a2ee8" stroke-width="6"/><rect x="781" y="432" width="18" height="16" fill="#6a4090" stroke="#9a2ee8" stroke-width="6"/><rect x="781" y="462" width="18" height="16" fill="#6a4090" stroke="#9a2ee8" stroke-width="6"/><rect x="791" y="492" width="18" height="16" fill="#6a4090" stroke="#9a2ee8" stroke-width="6"/><rect x="831" y="502" width="18" height="16" fill="#6a4090" stroke="#9a2ee8" stroke-width="6"/><rect x="841" y="332" width="18" height="16" fill="#6a4090" stroke="#9a2ee8" stroke-width="6"/><rect x="841" y="304" width="18" height="16" fill="#6a4090" stroke="#9a2ee8" stroke-width="6"/><rect x="861" y="312" width="18" height="16" fill="#6a4090" stroke="#9a2ee8" stroke-width="6"/><rect x="896" y="342" width="18" height="16" fill="#6a4090" stroke="#9a2ee8" stroke-width="6"/><rect x="896" y="402" width="18" height="16" fill="#6a4090" stroke="#9a2ee8" stroke-width="6"/><rect x="896" y="472" width="18" height="16" fill="#6a4090" stroke="#9a2ee8" stroke-width="6"/><rect x="868" y="472" width="18" height="16" fill="#6a4090" stroke="#9a2ee8" stroke-width="6"/><rect x="956" y="502" width="18" height="16" fill="#6a4090" stroke="#9a2ee8" stroke-width="6"/><rect x="1001" y="542" width="18" height="16" fill="#6a4090" stroke="#9a2ee8" stroke-width="6"/><rect x="973" y="542" width="18" height="16" fill="#6a4090" stroke="#9a2ee8" stroke-width="6"/><rect x="1031" y="412" width="18" height="16" fill="#6a4090" stroke="#9a2ee8" stroke-width="6"/><rect x="1031" y="440" width="18" height="16" fill="#6a4090" stroke="#9a2ee8" stroke-width="6"/><rect x="1081" y="467" width="18" height="16" fill="#6a4090" stroke="#9a2ee8" stroke-width="6"/><rect x="1091" y="402" width="18" height="16" fill="#6a4090" stroke="#9a2ee8" stroke-width="6"/><rect x="1091" y="374" width="18" height="16" fill="#6a4090" stroke="#9a2ee8" stroke-width="6"/><rect x="1096" y="432" width="18" height="16" fill="#6a4090" stroke="#9a2ee8" stroke-width="6"/><rect x="1124" y="432" width="18" height="16" fill="#6a4090" stroke="#9a2ee8" stroke-width="6"/><rect x="1181" y="402" width="18" height="16" fill="#6a4090" stroke="#9a2ee8" stroke-width="6"/><rect x="1153" y="402" width="18" height="16" fill="#6a4090" stroke="#9a2ee8" stroke-width="6"/><rect x="1176" y="447" width="18" height="16" fill="#6a4090" stroke="#9a2ee8" stroke-width="6"/><rect x="1148" y="447" width="18" height="16" fill="#6a4090" stroke="#9a2ee8" stroke-width="6"/><rect x="1096" y="537" width="18" height="16" fill="#6a4090" stroke="#9a2ee8" stroke-width="6"/><rect x="1096" y="509" width="18" height="16" fill="#6a4090" stroke="#9a2ee8" stroke-width="6"/><rect x="1156" y="537" width="18" height="16" fill="#6a4090" stroke="#9a2ee8" stroke-width="6"/><rect x="86" y="547" width="18" height="16" fill="#6a4090" stroke="#9a2ee8" stroke-width="6"/><rect x="86" y="602" width="18" height="16" fill="#6a4090" stroke="#9a2ee8" stroke-width="6"/><rect x="86" y="672" width="18" height="16" fill="#6a4090" stroke="#9a2ee8" stroke-width="6"/><rect x="58" y="672" width="18" height="16" fill="#6a4090" stroke="#9a2ee8" stroke-width="6"/><rect x="91" y="722" width="18" height="16" fill="#6a4090" stroke="#9a2ee8" stroke-width="6"/><rect x="161" y="567" width="18" height="16" fill="#6a4090" stroke="#9a2ee8" stroke-width="6"/><rect x="221" y="567" width="18" height="16" fill="#6a4090" stroke="#9a2ee8" stroke-width="6"/><rect x="249" y="567" width="18" height="16" fill="#6a4090" stroke="#9a2ee8" stroke-width="6"/><rect x="256" y="567" width="18" height="16" fill="#6a4090" stroke="#9a2ee8" stroke-width="6"/><rect x="284" y="567" width="18" height="16" fill="#6a4090" stroke="#9a2ee8" stroke-width="6"/><rect x="401" y="562" width="18" height="16" fill="#6a4090" stroke="#9a2ee8" stroke-width="6"/><rect x="429" y="562" width="18" height="16" fill="#6a4090" stroke="#9a2ee8" stroke-width="6"/><rect x="161" y="622" width="18" height="16" fill="#6a4090" stroke="#9a2ee8" stroke-width="6"/><rect x="189" y="622" width="18" height="16" fill="#6a4090" stroke="#9a2ee8" stroke-width="6"/><rect x="161" y="652" width="18" height="16" fill="#6a4090" stroke="#9a2ee8" stroke-width="6"/><rect x="161" y="680" width="18" height="16" fill="#6a4090" stroke="#9a2ee8" stroke-width="6"/><rect x="221" y="622" width="18" height="16" fill="#6a4090" stroke="#9a2ee8" stroke-width="6"/><rect x="221" y="594" width="18" height="16" fill="#6a4090" stroke="#9a2ee8" stroke-width="6"/><rect x="221" y="652" width="18" height="16" fill="#6a4090" stroke="#9a2ee8" stroke-width="6"/><rect x="311" y="632" width="18" height="16" fill="#6a4090" stroke="#9a2ee8" stroke-width="6"/><rect x="339" y="632" width="18" height="16" fill="#6a4090" stroke="#9a2ee8" stroke-width="6"/><rect x="366" y="627" width="18" height="16" fill="#6a4090" stroke="#9a2ee8" stroke-width="6"/><rect x="366" y="657" width="18" height="16" fill="#6a4090" stroke="#9a2ee8" stroke-width="6"/><rect x="431" y="632" width="18" height="16" fill="#6a4090" stroke="#9a2ee8" stroke-width="6"/><rect x="451" y="652" width="18" height="16" fill="#6a4090" stroke="#9a2ee8" stroke-width="6"/><rect x="511" y="627" width="18" height="16" fill="#6a4090" stroke="#9a2ee8" stroke-width="6"/><rect x="483" y="627" width="18" height="16" fill="#6a4090" stroke="#9a2ee8" stroke-width="6"/><rect x="511" y="652" width="18" height="16" fill="#6a4090" stroke="#9a2ee8" stroke-width="6"/><rect x="483" y="652" width="18" height="16" fill="#6a4090" stroke="#9a2ee8" stroke-width="6"/><rect x="591" y="622" width="18" height="16" fill="#6a4090" stroke="#9a2ee8" stroke-width="6"/><rect x="563" y="622" width="18" height="16" fill="#6a4090" stroke="#9a2ee8" stroke-width="6"/><rect x="641" y="622" width="18" height="16" fill="#6a4090" stroke="#9a2ee8" stroke-width="6"/><rect x="641" y="650" width="18" height="16" fill="#6a4090" stroke="#9a2ee8" stroke-width="6"/><rect x="656" y="657" width="18" height="16" fill="#6a4090" stroke="#9a2ee8" stroke-width="6"/><rect x="711" y="632" width="18" height="16" fill="#6a4090" stroke="#9a2ee8" stroke-width="6"/><rect x="711" y="660" width="18" height="16" fill="#6a4090" stroke="#9a2ee8" stroke-width="6"/><rect x="731" y="672" width="18" height="16" fill="#6a4090" stroke="#9a2ee8" stroke-width="6"/><rect x="731" y="700" width="18" height="16" fill="#6a4090" stroke="#9a2ee8" stroke-width="6"/><rect x="781" y="657" width="18" height="16" fill="#6a4090" stroke="#9a2ee8" stroke-width="6"/><rect x="809" y="657" width="18" height="16" fill="#6a4090" stroke="#9a2ee8" stroke-width="6"/><rect x="811" y="662" width="18" height="16" fill="#6a4090" stroke="#9a2ee8" stroke-width="6"/><rect x="871" y="662" width="18" height="16" fill="#6a4090" stroke="#9a2ee8" stroke-width="6"/><rect x="911" y="632" width="18" height="16" fill="#6a4090" stroke="#9a2ee8" stroke-width="6"/><rect x="891" y="592" width="18" height="16" fill="#6a4090" stroke="#9a2ee8" stroke-width="6"/><rect x="919" y="592" width="18" height="16" fill="#6a4090" stroke="#9a2ee8" stroke-width="6"/><rect x="931" y="562" width="18" height="16" fill="#6a4090" stroke="#9a2ee8" stroke-width="6"/><rect x="961" y="562" width="18" height="16" fill="#6a4090" stroke="#9a2ee8" stroke-width="6"/><rect x="961" y="534" width="18" height="16" fill="#6a4090" stroke="#9a2ee8" stroke-width="6"/><rect x="291" y="742" width="18" height="16" fill="#6a4090" stroke="#9a2ee8" stroke-width="6"/><rect x="321" y="712" width="18" height="16" fill="#6a4090" stroke="#9a2ee8" stroke-width="6"/><rect x="376" y="712" width="18" height="16" fill="#6a4090" stroke="#9a2ee8" stroke-width="6"/><rect x="391" y="742" width="18" height="16" fill="#6a4090" stroke="#9a2ee8" stroke-width="6"/><rect x="363" y="742" width="18" height="16" fill="#6a4090" stroke="#9a2ee8" stroke-width="6"/><rect x="451" y="737" width="18" height="16" fill="#6a4090" stroke="#9a2ee8" stroke-width="6"/><rect x="511" y="702" width="18" height="16" fill="#6a4090" stroke="#9a2ee8" stroke-width="6"/><rect x="521" y="732" width="18" height="16" fill="#6a4090" stroke="#9a2ee8" stroke-width="6"/><rect x="571" y="737" width="18" height="16" fill="#6a4090" stroke="#9a2ee8" stroke-width="6"/><rect x="571" y="765" width="18" height="16" fill="#6a4090" stroke="#9a2ee8" stroke-width="6"/><rect x="631" y="737" width="18" height="16" fill="#6a4090" stroke="#9a2ee8" stroke-width="6"/><rect x="671" y="702" width="18" height="16" fill="#6a4090" stroke="#9a2ee8" stroke-width="6"/><rect x="731" y="697" width="18" height="16" fill="#6a4090" stroke="#9a2ee8" stroke-width="6"/><rect x="751" y="727" width="18" height="16" fill="#6a4090" stroke="#9a2ee8" stroke-width="6"/><rect x="791" y="697" width="18" height="16" fill="#6a4090" stroke="#9a2ee8" stroke-width="6"/><rect x="821" y="697" width="18" height="16" fill="#6a4090" stroke="#9a2ee8" stroke-width="6"/><rect x="821" y="669" width="18" height="16" fill="#6a4090" stroke="#9a2ee8" stroke-width="6"/><rect x="821" y="732" width="18" height="16" fill="#6a4090" stroke="#9a2ee8" stroke-width="6"/><rect x="821" y="760" width="18" height="16" fill="#6a4090" stroke="#9a2ee8" stroke-width="6"/><rect x="861" y="752" width="18" height="16" fill="#6a4090" stroke="#9a2ee8" stroke-width="6"/><rect x="791" y="757" width="18" height="16" fill="#6a4090" stroke="#9a2ee8" stroke-width="6"/><rect x="791" y="785" width="18" height="16" fill="#6a4090" stroke="#9a2ee8" stroke-width="6"/><rect x="831" y="757" width="18" height="16" fill="#6a4090" stroke="#9a2ee8" stroke-width="6"/><rect x="896" y="712" width="18" height="16" fill="#6a4090" stroke="#9a2ee8" stroke-width="6"/><rect x="896" y="684" width="18" height="16" fill="#6a4090" stroke="#9a2ee8" stroke-width="6"/><rect x="951" y="752" width="18" height="16" fill="#6a4090" stroke="#9a2ee8" stroke-width="6"/><rect x="991" y="762" width="18" height="16" fill="#6a4090" stroke="#9a2ee8" stroke-width="6"/><rect x="1019" y="762" width="18" height="16" fill="#6a4090" stroke="#9a2ee8" stroke-width="6"/><rect x="1006" y="692" width="18" height="16" fill="#6a4090" stroke="#9a2ee8" stroke-width="6"/><rect x="1031" y="692" width="18" height="16" fill="#6a4090" stroke="#9a2ee8" stroke-width="6"/><rect x="1016" y="747" width="18" height="16" fill="#6a4090" stroke="#9a2ee8" stroke-width="6"/><rect x="1044" y="747" width="18" height="16" fill="#6a4090" stroke="#9a2ee8" stroke-width="6"/><rect x="1101" y="762" width="18" height="16" fill="#6a4090" stroke="#9a2ee8" stroke-width="6"/><rect x="581" y="537" width="18" height="16" fill="#6a4090" stroke="#9a2ee8" stroke-width="6"/><rect x="531" y="547" width="18" height="16" fill="#6a4090" stroke="#9a2ee8" stroke-width="6"/><rect x="671" y="537" width="18" height="16" fill="#6a4090" stroke="#9a2ee8" stroke-width="6"/><rect x="699" y="537" width="18" height="16" fill="#6a4090" stroke="#9a2ee8" stroke-width="6"/><rect x="761" y="537" width="18" height="16" fill="#6a4090" stroke="#9a2ee8" stroke-width="6"/><rect x="801" y="572" width="18" height="16" fill="#6a4090" stroke="#9a2ee8" stroke-width="6"/><rect x="836" y="587" width="18" height="16" fill="#6a4090" stroke="#9a2ee8" stroke-width="6"/><rect x="808" y="587" width="18" height="16" fill="#6a4090" stroke="#9a2ee8" stroke-width="6"/><rect x="896" y="537" width="18" height="16" fill="#6a4090" stroke="#9a2ee8" stroke-width="6"/><rect x="896" y="565" width="18" height="16" fill="#6a4090" stroke="#9a2ee8" stroke-width="6"/><rect x="921" y="537" width="18" height="16" fill="#6a4090" stroke="#9a2ee8" stroke-width="6"/><rect x="111" y="492" width="18" height="16" fill="#6a4090" stroke="#9a2ee8" stroke-width="6"/><rect x="146" y="552" width="18" height="16" fill="#6a4090" stroke="#9a2ee8" stroke-width="6"/><rect x="191" y="692" width="18" height="16" fill="#6a4090" stroke="#9a2ee8" stroke-width="6"/><rect x="191" y="664" width="18" height="16" fill="#6a4090" stroke="#9a2ee8" stroke-width="6"/><rect x="241" y="682" width="18" height="16" fill="#6a4090" stroke="#9a2ee8" stroke-width="6"/><rect x="241" y="654" width="18" height="16" fill="#6a4090" stroke="#9a2ee8" stroke-width="6"/><rect x="266" y="712" width="18" height="16" fill="#6a4090" stroke="#9a2ee8" stroke-width="6"/><rect x="446" y="512" width="18" height="16" fill="#6a4090" stroke="#9a2ee8" stroke-width="6"/><rect x="474" y="512" width="18" height="16" fill="#6a4090" stroke="#9a2ee8" stroke-width="6"/><rect x="431" y="532" width="18" height="16" fill="#6a4090" stroke="#9a2ee8" stroke-width="6"/><rect x="403" y="532" width="18" height="16" fill="#6a4090" stroke="#9a2ee8" stroke-width="6"/><rect x="571" y="472" width="18" height="16" fill="#6a4090" stroke="#9a2ee8" stroke-width="6"/><rect x="599" y="472" width="18" height="16" fill="#6a4090" stroke="#9a2ee8" stroke-width="6"/><rect x="601" y="492" width="18" height="16" fill="#6a4090" stroke="#9a2ee8" stroke-width="6"/><rect x="691" y="522" width="18" height="16" fill="#6a4090" stroke="#9a2ee8" stroke-width="6"/><rect x="751" y="492" width="18" height="16" fill="#6a4090" stroke="#9a2ee8" stroke-width="6"/><rect x="876" y="552" width="18" height="16" fill="#6a4090" stroke="#9a2ee8" stroke-width="6"/><rect x="876" y="524" width="18" height="16" fill="#6a4090" stroke="#9a2ee8" stroke-width="6"/><rect x="591" y="692" width="18" height="16" fill="#6a4090" stroke="#9a2ee8" stroke-width="6"/><rect x="691" y="662" width="18" height="16" fill="#6a4090" stroke="#9a2ee8" stroke-width="6"/><rect x="691" y="690" width="18" height="16" fill="#6a4090" stroke="#9a2ee8" stroke-width="6"/><rect x="631" y="672" width="18" height="16" fill="#6a4090" stroke="#9a2ee8" stroke-width="6"/><rect x="341" y="592" width="18" height="16" fill="#6a4090" stroke="#9a2ee8" stroke-width="6"/><rect x="401" y="592" width="18" height="16" fill="#6a4090" stroke="#9a2ee8" stroke-width="6"/><rect x="471" y="592" width="18" height="16" fill="#6a4090" stroke="#9a2ee8" stroke-width="6"/><rect x="531" y="592" width="18" height="16" fill="#6a4090" stroke="#9a2ee8" stroke-width="6"/><rect x="531" y="564" width="18" height="16" fill="#6a4090" stroke="#9a2ee8" stroke-width="6"/><rect x="1036" y="462" width="18" height="16" fill="#6a4090" stroke="#9a2ee8" stroke-width="6"/><rect x="1008" y="462" width="18" height="16" fill="#6a4090" stroke="#9a2ee8" stroke-width="6"/><rect x="1101" y="492" width="18" height="16" fill="#6a4090" stroke="#9a2ee8" stroke-width="6"/><rect x="295" y="255" width="150" height="85" fill="none" stroke="#9a2ee8" stroke-width="9"/><path d="M300 290 h40 M400 290 h40 M300 320 h40 M400 320 h40" stroke="#9a2ee8" stroke-width="9"/><path d="M1145 205 V355" stroke="#9a2ee8" stroke-width="26" stroke-dasharray="14 8"/><path d="M1145 205 V355" stroke="#000" stroke-width="10" stroke-dasharray="10 12"/><path d="M1205 200 V370" stroke="#9a2ee8" stroke-width="26" stroke-dasharray="14 8"/><path d="M1205 200 V370" stroke="#000" stroke-width="10" stroke-dasharray="10 12"/><path d="M1248 225 V345" stroke="#9a2ee8" stroke-width="26" stroke-dasharray="14 8"/><path d="M1248 225 V345" stroke="#000" stroke-width="10" stroke-dasharray="10 12"/><path d="M1300 190 V270" stroke="#9a2ee8" stroke-width="26" stroke-dasharray="14 8"/><path d="M1300 190 V270" stroke="#000" stroke-width="10" stroke-dasharray="10 12"/><rect x="1272" y="272" width="62" height="100" fill="none" stroke="#9a2ee8" stroke-width="6"/><rect x="640" y="425" width="30" height="95" fill="#9a2ee8"/><rect x="640" y="330" width="35" height="80" fill="none" stroke="#9a2ee8" stroke-width="8"/><path d="M780 400 h50 v120 h-50 z" fill="none" stroke="#9a2ee8" stroke-width="7" stroke-dasharray="12 10"/><path d="M150 575 h160 M720 705 h120 M780 765 h60" stroke="#9a2ee8" stroke-width="14" stroke-dasharray="16 6"/><rect x="675" y="280" width="100" height="110" fill="#ff1818"/><path d="M690 300 h20 M730 300 h25 M690 330 h60 M700 360 h50" stroke="#c02860" stroke-width="8"/></svg>
<svg class="a" style="left:26px;top:1001px;" width="20" height="20" viewBox="0 0 20 20"><circle cx="9.5" cy="9.5" r="7.5" fill="url(#rg1)" stroke="#a0a0a0" stroke-width="1"/><defs><radialGradient id="rg1" cx="0.4" cy="0.35" r="0.7"><stop offset="0" stop-color="#ffffff"/><stop offset="1" stop-color="#d8d8d8"/></radialGradient><radialGradient id="rg2" cx="0.4" cy="0.35" r="0.7"><stop offset="0" stop-color="#b0f0ff"/><stop offset="0.5" stop-color="#2a8ab8"/><stop offset="1" stop-color="#0a3050"/></radialGradient></defs></svg>
<svg class="a" style="left:137px;top:1001px;" width="20" height="20" viewBox="0 0 20 20"><circle cx="9.5" cy="9.5" r="7.5" fill="#f4f4f4" stroke="#6a8aa0" stroke-width="1"/><circle cx="9.5" cy="9.5" r="4.6" fill="url(#rg2)"/></svg>
<div class="t" style="left:54.0px;top:1003.1px;font-size:14.7px;letter-spacing:0.003px;color:#1a1a1a;">Histogram</div>
<div class="t" style="left:165.0px;top:1003.1px;font-size:14.7px;letter-spacing:0.058px;color:#1a1a1a;">Layer</div>
<div class="a" style="left:280.0px;top:996.5px;width:29.0px;height:27.0px;border:1px solid #8a8a8a;border-radius:3px;background:linear-gradient(180deg,#f8f8f8,#dcdcdc)"></div>
<svg class="a" style="left:280px;top:996px;" width="29" height="28" viewBox="0 0 29 28"><path d="M13.5 12 L13.5 8.5 A5.5 5.5 0 0 1 24.5 8.5 L24.5 12" fill="none" stroke="#4a5268" stroke-width="3"/><rect x="3.5" y="11.5" width="16.5" height="12.5" fill="#70d070" stroke="#2a6a2a" stroke-width="1.1"/><rect x="11" y="15.5" width="1.4" height="4" fill="#1a5a1a"/></svg>
<div class="a" style="left:328.5px;top:159.0px;width:1091.5px;height:414.5px;background:linear-gradient(180deg,#ffffff 0%,#fbfbfb 100%);border:1px solid #898c95"></div>
<div class="a" style="left:328.5px;top:125.5px;width:1094.5px;height:1.0px;background:#9a9a9a"></div>
<div class="a" style="left:329.5px;top:126.5px;width:1093.0px;height:1.0px;background:#ffffff"></div>
<div class="a" style="left:328.5px;top:125.5px;width:1.0px;height:160.0px;background:#9a9a9a"></div>
<div class="a" style="left:329.5px;top:126.5px;width:1.0px;height:33.0px;background:#ffffff"></div>
<div class="a" style="left:1423.0px;top:125.5px;width:1.5px;height:450.0px;background:#fdfdfd"></div>
<div class="a" style="left:332.5px;top:130.0px;width:117.5px;height:29.5px;border:1px solid #898c95;border-bottom:none;background:linear-gradient(180deg,#f6f6f6 0%,#ececec 45%,#e2e2e2 55%,#dadada 100%)"></div>
<div class="t" style="left:375.0px;top:137.6px;font-size:15px;letter-spacing:-0.529px;color:#1c1c1c;">Summary</div>
<div class="a" style="left:450.0px;top:130.0px;width:86.5px;height:29.5px;border:1px solid #898c95;border-bottom:none;background:linear-gradient(180deg,#f6f6f6 0%,#ececec 45%,#e2e2e2 55%,#dadada 100%)"></div>
<div class="t" style="left:496.0px;top:137.6px;font-size:15px;letter-spacing:-0.171px;color:#1c1c1c;">Etch</div>
<div class="a" style="left:642.0px;top:130.0px;width:129.5px;height:29.5px;border:1px solid #898c95;border-bottom:none;background:linear-gradient(180deg,#f6f6f6 0%,#ececec 45%,#e2e2e2 55%,#dadada 100%)"></div>
<div class="t" style="left:685.0px;top:137.6px;font-size:15px;letter-spacing:-0.263px;color:#1c1c1c;">Mechanical</div>
<div class="a" style="left:771.5px;top:130.0px;width:210.5px;height:29.5px;border:1px solid #898c95;border-bottom:none;background:linear-gradient(180deg,#f6f6f6 0%,#ececec 45%,#e2e2e2 55%,#dadada 100%)"></div>
<div class="t" style="left:817.0px;top:137.6px;font-size:15px;letter-spacing:-0.088px;color:#1c1c1c;">Component Placement</div>
<div class="a" style="left:982.0px;top:130.0px;width:106.0px;height:29.5px;border:1px solid #898c95;border-bottom:none;background:linear-gradient(180deg,#f6f6f6 0%,#ececec 45%,#e2e2e2 55%,#dadada 100%)"></div>
<div class="t" style="left:1027.0px;top:137.6px;font-size:15px;letter-spacing:0.136px;color:#1c1c1c;">Quality</div>
<div class="a" style="left:1088.0px;top:130.0px;width:155.5px;height:29.5px;border:1px solid #898c95;border-bottom:none;background:linear-gradient(180deg,#f6f6f6 0%,#ececec 45%,#e2e2e2 55%,#dadada 100%)"></div>
<div class="t" style="left:1133.0px;top:137.6px;font-size:15px;letter-spacing:-0.087px;color:#1c1c1c;">Process Setup</div>
<div class="a" style="left:1243.5px;top:130.0px;width:71.5px;height:29.5px;border:1px solid #898c95;border-bottom:none;background:linear-gradient(180deg,#f6f6f6 0%,#ececec 45%,#e2e2e2 55%,#dadada 100%)"></div>
<div class="t" style="left:1260.5px;top:137.6px;font-size:15px;letter-spacing:0.122px;color:#1c1c1c;">Other</div>
<div class="a" style="left:536.5px;top:126.0px;width:105.5px;height:34.0px;border:1px solid #898c95;border-bottom:none;background:#ffffff"></div>
<div class="t" style="left:584.0px;top:136.1px;font-size:15px;letter-spacing:-0.471px;color:#1c1c1c;">Solder</div>
<svg class="a" style="left:0;top:0" width="1440" height="170" viewBox="0 0 1440 170"><rect x="339" y="135.3" width="14.800000000000011" height="4.3" fill="#e8e060"/><rect x="339" y="135.3" width="7.800000000000011" height="4.3" fill="#b80808" stroke="#3a0000" stroke-width="0.9"/><rect x="339" y="139.60000000000002" width="14.800000000000011" height="1.2" fill="#506040"/><rect x="339" y="142.5" width="19.5" height="4.3" fill="#e8e060"/><rect x="339" y="142.5" width="14.800000000000011" height="4.3" fill="#b80808" stroke="#3a0000" stroke-width="0.9"/><rect x="339" y="146.8" width="19.5" height="1.2" fill="#506040"/><rect x="339" y="149.4" width="19.5" height="4.3" fill="#e8e060"/><rect x="339" y="149.4" width="12.300000000000011" height="4.3" fill="#b80808" stroke="#3a0000" stroke-width="0.9"/><rect x="339" y="153.70000000000002" width="19.5" height="1.2" fill="#506040"/><path d="M467 132 L467 138 Q471 143 467 148 L467 155 M474 132 L474 138 Q470 143 474 148 L474 155" fill="none" stroke="#e0c820" stroke-width="3"/><path d="M552 131 Q548 137 549 139 A3.3 3.3 0 0 0 555 139 Q556 137 552 131 Z" fill="#5a9ae0" stroke="#2a5aa0" stroke-width="0.8"/><path d="M553 148 Q559 141 568 146 L569 148 Z" fill="#f0d860"/><rect x="547" y="149" width="23" height="3.5" fill="#2a9a3a"/><rect x="660" y="132" width="8" height="15" rx="2" fill="#e0e0f8" stroke="#6a40a0" stroke-width="1.3"/><path d="M662 147 v5 M666 147 v5" stroke="#6a40a0" stroke-width="1.2"/><rect x="648" y="147" width="12" height="7" rx="1" fill="#3a6ad0" stroke="#1a3a80" stroke-width="0.8"/><path d="M780 148 L788 148 L796 140 L803 140" fill="none" stroke="#40a0c0" stroke-width="1.5"/><rect x="799" y="132" width="2.5" height="12" fill="#c040c0"/><rect x="780" y="151" width="23" height="3" fill="#30a040"/><path d="M990 139 Q1001 126 1012 139 Q1001 134 990 139 Z" fill="#30a050"/><path d="M994 137 Q1001 131 1008 137 L1004 140 L998 140 Z" fill="#e02080"/><path d="M999 140 L997 152 L1005 152 L1003 140" fill="#d8e8f8" stroke="#6080a0" stroke-width="1"/><rect x="1097.5" y="131.5" width="22" height="21" fill="#d8e8f8" stroke="#4a6a9a" stroke-width="1"/><path d="M1099 142 L1104 142 L1106 136 L1109 148 L1112 139 L1114 142 L1118 142" fill="none" stroke="#2a3a6a" stroke-width="1.2"/></svg>
<div class="a" style="left:336.5px;top:166.5px;width:486.0px;height:325.0px;background:#fff;border:1px solid #8e8f8f"></div>
<div class="a" style="left:422.5px;top:446.5px;width:375.0px;height:24.0px;border:1px solid #d9d9d9;border-radius:2px;background:linear-gradient(180deg,#f2f2f2 0%,#e6e6e6 100%)"></div>
<div class="t" style="left:426.7px;top:172.3px;font-size:16.2px;letter-spacing:0.183px;color:#1c1c1c;">SMD pad without solderpaste;radial (11 / 0)</div>
<div class="t" style="left:426.7px;top:197.4px;font-size:16.2px;letter-spacing:0.244px;color:#1c1c1c;">SMD pad without solderpaste;connector (5 / 0)</div>
<div class="t" style="left:426.7px;top:222.6px;font-size:16.2px;letter-spacing:0.215px;color:#1c1c1c;">SMD pad without solderpaste;chip (8 / 0)</div>
<div class="t" style="left:426.7px;top:247.7px;font-size:16.2px;letter-spacing:0.151px;color:#1c1c1c;">SMD pad without solderpaste (40 / 0)</div>
<div class="t" style="left:398.7px;top:272.9px;font-size:16.2px;letter-spacing:-0.018px;color:#1c1c1c;">Testpoint Analysis (STD) (242 / 0)</div>
<svg class="a" style="left:376px;top:277.6px;" width="10" height="9" viewBox="0 0 10 9"><path d="M9 0.5 L9 8 L1.5 8 Z" fill="#404040"/></svg>
<div class="t" style="left:426.7px;top:298.0px;font-size:16.2px;letter-spacing:0.080px;color:#1c1c1c;">Testpoint to SM (242 / 0)</div>
<div class="t" style="left:398.7px;top:323.2px;font-size:16.2px;letter-spacing:0.054px;color:#1c1c1c;">Pin-to-Pad Analysis (STD) (243 / 6)</div>
<svg class="a" style="left:376px;top:327.9px;" width="10" height="9" viewBox="0 0 10 9"><path d="M9 0.5 L9 8 L1.5 8 Z" fill="#404040"/></svg>
<div class="t" style="left:426.7px;top:348.3px;font-size:16.2px;letter-spacing:-0.207px;color:#1c1c1c;">Toe Distance Min;_ES (55 / 1)</div>
<div class="t" style="left:426.7px;top:373.5px;font-size:16.2px;letter-spacing:-0.116px;color:#1c1c1c;">Right Distance Min;_ES (47 / 0)</div>
<div class="t" style="left:426.7px;top:398.6px;font-size:16.2px;letter-spacing:-0.091px;color:#1c1c1c;">Pin Pitch / Pad Pitch;_ES (39 / 0)</div>
<div class="t" style="left:426.7px;top:423.8px;font-size:16.2px;letter-spacing:-0.148px;color:#1c1c1c;">Left Distance Min;_ES (47 / 4)</div>
<div class="t" style="left:426.7px;top:448.9px;font-size:16.2px;letter-spacing:-0.158px;color:#1c1c1c;">Heel Distance Min;_ES (55 / 1)</div>
<div class="a" style="left:799.0px;top:167.5px;width:22.5px;height:323.0px;background:linear-gradient(90deg,#e6e6e6 0%,#f2f2f2 30%,#f2f2f2 70%,#e6e6e6 100%)"></div>
<div class="a" style="left:800.0px;top:375.0px;width:20.0px;height:90.0px;border:1px solid #989898;border-radius:2px;background:linear-gradient(90deg,#f2f2f2 0%,#e6e6e6 45%,#d4d4d4 55%,#d8d8d8 100%)"></div>
<svg class="a" style="left:799px;top:167px;" width="23" height="324" viewBox="0 0 23 324"><path d="M7.5 15 L11.5 11 L15.5 15 Z" fill="#303030"/><path d="M7.5 310 L11.5 314 L15.5 310 Z" fill="#303030"/><path d="M8 248.5 h6 M8 251.5 h6 M8 254.5 h6" stroke="#303030" stroke-width="1.2"/></svg>
<div class="a" style="left:830.0px;top:166.5px;width:583.5px;height:325.0px;background:#fff;border:1px solid #8e8f8f"></div>
<div class="t" style="left:837.0px;top:176.4px;font-size:17px;font-weight:bold;transform:scaleX(1.1400);transform-origin:0 0;color:#111111;">Category</div>
<div class="t" style="left:949.8px;top:176.4px;font-size:17px;font-weight:bold;transform:scaleX(1.0923);transform-origin:0 0;color:#111111;">Heel Distance Min;_ES  (STD)</div>
<div class="t" style="left:837.0px;top:209.1px;font-size:17px;font-weight:bold;transform:scaleX(1.0459);transform-origin:0 0;color:#111111;">Measured</div>
<div class="t" style="left:949.8px;top:209.1px;font-size:17px;font-weight:bold;transform:scaleX(1.0929);transform-origin:0 0;color:#111111;">31.5mil</div>
<div class="t" style="left:1062.0px;top:209.1px;font-size:17px;font-weight:bold;transform:scaleX(1.1625);transform-origin:0 0;color:#111111;">1 of 55</div>
<div class="a" style="left:1232.0px;top:201.2px;width:178.0px;height:32.0px;background:#f41c1c"></div>
<svg class="a" style="left:1316px;top:211px;" width="12" height="12" viewBox="0 0 12 12"><circle cx="6" cy="6" r="5.2" fill="#000"/></svg>
<div class="t" style="left:837.0px;top:241.9px;font-size:15px;letter-spacing:-0.200px;color:#262626;">Range</div>
<div class="t" style="left:949.8px;top:241.9px;font-size:15px;letter-spacing:0.591px;color:#262626;">*:heel_dist;*_* = -0.039 -0.079 -0.118</div>
<div class="t" style="left:837.0px;top:261.6px;font-size:15px;letter-spacing:0.070px;color:#262626;">Layer</div>
<div class="t" style="left:949.8px;top:261.6px;font-size:15px;letter-spacing:0.392px;color:#262626;">comp_+_bot</div>
<div class="t" style="left:837.0px;top:281.3px;font-size:15px;letter-spacing:-0.106px;color:#262626;">Checklist</div>
<div class="t" style="left:949.8px;top:281.3px;font-size:15px;letter-spacing:-0.016px;color:#262626;">valor_assembly</div>
<div class="t" style="left:837.0px;top:301.0px;font-size:15px;letter-spacing:0.062px;color:#262626;">Action</div>
<div class="t" style="left:949.8px;top:301.0px;font-size:15px;letter-spacing:-0.037px;color:#262626;">Pin-to-Pad Analysis</div>
<div class="t" style="left:837.0px;top:320.7px;font-size:15px;letter-spacing:-0.313px;color:#262626;">Model</div>
<div class="t" style="left:949.8px;top:320.7px;font-size:15px;letter-spacing:-1.750px;color:#262626;">STD</div>
<div class="t" style="left:837.0px;top:340.4px;font-size:15px;letter-spacing:-0.319px;color:#262626;">Flags</div>
<div class="t" style="left:949.8px;top:340.4px;font-size:15px;letter-spacing:-0.245px;color:#262626;">Viewed</div>
<div class="t" style="left:837.0px;top:399.1px;font-size:15px;letter-spacing:-0.218px;color:#262626;">Elements</div>
<div class="t" style="left:949.8px;top:399.1px;font-size:15px;letter-spacing:-1.174px;color:#262626;">R8</div>
<div class="t" style="left:837.0px;top:418.8px;font-size:15px;letter-spacing:0.007px;color:#262626;">Part number</div>
<div class="t" style="left:951.3px;top:418.8px;font-size:15px;letter-spacing:-0.860px;color:#262626;">107-RES</div>
<div class="t" style="left:837.0px;top:438.5px;font-size:15px;letter-spacing:-0.251px;color:#262626;">Mfg/MPN</div>
<div class="t" style="left:949.8px;top:438.5px;font-size:15px;letter-spacing:-0.528px;color:#262626;">ROHM/MCR18ERTF512</div>
<div class="a" style="left:338.0px;top:496.0px;width:27.0px;height:23.0px;border:1px solid #a8a8a8;border-radius:3px;background:linear-gradient(180deg,#f6f6f6 0%,#e4e4e4 100%);"></div>
<div class="a" style="left:377.0px;top:496.0px;width:27.7px;height:23.0px;border:1px solid #a8a8a8;border-radius:3px;background:linear-gradient(180deg,#f6f6f6 0%,#e4e4e4 100%);"></div>
<div class="a" style="left:416.0px;top:496.0px;width:27.7px;height:23.0px;border:1px solid #a8a8a8;border-radius:3px;background:linear-gradient(180deg,#f6f6f6 0%,#e4e4e4 100%);"></div>
<svg class="a" style="left:338px;top:496px;" width="106" height="23" viewBox="0 0 106 23"><path d="M11 5.5 h5 v4.5 h4.5 v5 h-4.5 v4.5 h-5 v-4.5 h-4.5 v-5 h4.5 z" fill="#c4c4c4" stroke="#8a8a8a" stroke-width="1"/>
<path d="M45 18.5 L61 4.5 L64 7.5 L48 21 L44.5 21.5 Z" fill="#e8e8e8" stroke="#9a9a9a" stroke-width="1.2"/><path d="M47 17 L62 5.5" stroke="#bdbdbd" stroke-width="1"/>
<path d="M84 4 L100 19.5 M100 4 L84 19.5" stroke="#9c9c9c" stroke-width="1.8"/></svg>
<div class="t" style="left:454.0px;top:500.4px;font-size:14.6px;letter-spacing:0.027px;color:#1c1c1c;">Issue</div>
<div class="a" style="left:533.0px;top:494.0px;width:690.0px;height:27.0px;background:#fff;border:1px solid #e2e3ea;border-radius:2px"></div>
<svg class="a" style="left:1204px;top:503px;" width="14" height="8" viewBox="0 0 14 8"><path d="M1.5 1.5 L12 1.5 L6.75 7 Z" fill="#111"/></svg>
<div class="t" style="left:1244.6px;top:500.3px;font-size:14.8px;letter-spacing:0.420px;color:#1c1c1c;">Severity</div>
<div class="a" style="left:1325.2px;top:494.0px;width:87.4px;height:27.0px;border:1px solid #707070;border-radius:3px;background:linear-gradient(180deg,#f2f2f2 0%,#ebebeb 50%,#dddddd 51%,#cfcfcf 100%)"></div>
<div class="t" style="left:1329.5px;top:499.5px;font-size:15px;letter-spacing:0.024px;color:#1c1c1c;">Critical</div>
<svg class="a" style="left:1394px;top:505px;" width="12" height="8" viewBox="0 0 12 8"><path d="M1 1 L11 1 L6 6.5 Z" fill="#111"/></svg>
<div class="a" style="left:336.5px;top:523.0px;width:1077.5px;height:1.5px;background:#6e6e6e"></div>
<div class="a" style="left:336.5px;top:524.5px;width:1077.5px;height:1.0px;background:#fdfdfd"></div>
<div class="t" style="left:340.0px;top:538.3px;font-size:14.8px;letter-spacing:0.075px;color:#1c1c1c;">View by</div>
<div class="a" style="left:419.0px;top:532.5px;width:112.0px;height:27.0px;border:1px solid #707070;border-radius:3px;background:linear-gradient(180deg,#f2f2f2 0%,#ebebeb 50%,#dddddd 51%,#cfcfcf 100%)"></div>
<div class="t" style="left:424.5px;top:538.0px;font-size:15px;letter-spacing:0.110px;color:#1c1c1c;">Classic</div>
<svg class="a" style="left:512px;top:544px;" width="12" height="8" viewBox="0 0 12 8"><path d="M1 1 L11 1 L6 6.5 Z" fill="#111"/></svg>
<div class="t" style="left:539.8px;top:538.3px;font-size:14.8px;letter-spacing:0.043px;color:#1c1c1c;">Order</div>
<div class="a" style="left:618.7px;top:532.5px;width:112.3px;height:27.0px;border:1px solid #707070;border-radius:3px;background:linear-gradient(180deg,#f2f2f2 0%,#ebebeb 50%,#dddddd 51%,#cfcfcf 100%)"></div>
<div class="t" style="left:623.0px;top:538.0px;font-size:15px;letter-spacing:0.948px;color:#1c1c1c;">by Weight</div>
<svg class="a" style="left:711.5px;top:544px;" width="12" height="8" viewBox="0 0 12 8"><path d="M1 1 L11 1 L6 6.5 Z" fill="#111"/></svg>
<div class="a" style="left:755.0px;top:532.5px;width:56.0px;height:27.0px;border:1px solid #707070;border-radius:3px;background:linear-gradient(180deg,#f2f2f2 0%,#ebebeb 50%,#dddddd 51%,#cfcfcf 100%)"></div>
<svg class="a" style="left:791.5px;top:544px;" width="12" height="8" viewBox="0 0 12 8"><path d="M1 1 L11 1 L6 6.5 Z" fill="#111"/></svg>
<svg class="a" style="left:762px;top:540px;" width="22" height="12" viewBox="0 0 22 12"><path d="M1.5 3 L20.5 2 L20.5 9 L1.5 9.5 Z" fill="#e41818" stroke="#8a1010" stroke-width="0.8"/></svg>
<div class="t" style="left:832.6px;top:538.3px;font-size:14.8px;letter-spacing:0.306px;color:#1c1c1c;">Filter by flags:</div>
<div class="a" style="left:956.0px;top:533.6px;width:28.0px;height:25.0px;border:1px solid #6a8aa8;border-radius:3px;background:linear-gradient(180deg,#f4f8fc 0%,#d8e6f2 100%)"></div>
<svg class="a" style="left:956px;top:533px;" width="28" height="26" viewBox="0 0 28 26"><path d="M6 5.5 L22 5.5 L16 12.5 L16 21 L12 21 L12 12.5 Z" fill="url(#fg2)" stroke="#2a5aa0" stroke-width="1.1"/><defs><linearGradient id="fg2" x1="0" y1="0" x2="0" y2="1"><stop offset="0" stop-color="#c8e0f8"/><stop offset="1" stop-color="#3a7ad0"/></linearGradient></defs></svg>
<div class="a" style="left:1010.0px;top:533.6px;width:113.0px;height:25.5px;border:1px solid #a8a8a8;border-radius:2px;background:linear-gradient(180deg,#f2f2f2 0%,#e6e6e6 50%,#dadada 100%)"></div>
<div class="a" style="left:1100.5px;top:534.0px;width:1.0px;height:25.0px;background:#a8a8a8"></div>
<div class="t" style="left:1015.0px;top:538.1px;font-size:15px;letter-spacing:0.043px;color:#1c1c1c;">Padstack</div>
<svg class="a" style="left:1105px;top:542px;" width="12" height="8" viewBox="0 0 12 8"><path d="M1 1 L11 1 L6 6.5 Z" fill="#111"/></svg>
<div class="a" style="left:1132.7px;top:533.6px;width:200.0px;height:25.5px;background:#fff;border:1px solid #e2e3ea;border-radius:2px"></div>
<svg class="a" style="left:1314px;top:542px;" width="12" height="8" viewBox="0 0 12 8"><path d="M1 1 L11 1 L6 6.5 Z" fill="#111"/></svg>
<div class="a" style="left:1375.5px;top:533.0px;width:28.5px;height:25.5px;border:1px solid #808080;border-radius:3px;background:linear-gradient(180deg,#f4f4f4 0%,#dcdcdc 100%)"></div>
<svg class="a" style="left:1375px;top:533px;" width="29" height="26" viewBox="0 0 29 26"><path d="M5 4 L21 4 L15 10 L15 18 L11 18 L11 10 Z" fill="#c8d0d8" stroke="#7a8a9a" stroke-width="1"/><path d="M12 11 L23 21.5 M23 11 L12 21.5" stroke="#e06060" stroke-width="2.2"/></svg>
<div class="a" style="left:328.0px;top:583.0px;width:1096.0px;height:450.0px;border-top:1px solid #a4a4a4;border-left:1px solid #a4a4a4"></div>
<div class="a" style="left:328.0px;top:584.0px;width:1095.0px;height:1.0px;background:#fdfdfd"></div>
<div class="a" style="left:1435.0px;top:583.0px;width:1.5px;height:451.0px;background:#fbfbfb"></div>
<div class="a" style="left:328.0px;top:1032.0px;width:1108.0px;height:1.5px;background:#fbfbfb"></div>
<svg class="a" style="left:329px;top:606px" width="1094" height="406" viewBox="0 0 1094 406"><rect x="0" y="0" width="1094" height="406" fill="#000"/><rect x="25" y="0" width="16" height="74" fill="#4fa800"/><rect x="1" y="66" width="69" height="73" fill="none" stroke="#e02020" stroke-width="3"/><circle cx="34.19999999999999" cy="102.29999999999995" r="36" fill="#4fa800" stroke="#98c028" stroke-width="1.2"/><circle cx="34.19999999999999" cy="102.29999999999995" r="19.5" fill="#c8a400" stroke="#b8b010" stroke-width="1"/><text x="1" y="109" font-family="Liberation Serif" font-weight="bold" font-size="18" fill="#98b830" opacity="0.75">T</text><text x="54" y="109" font-family="Liberation Serif" font-weight="bold" font-size="18" fill="#98b830" opacity="0.75">3</text><rect x="112.30000000000001" y="0" width="15.8" height="406" fill="#4fa800"/><rect x="629.5" y="0" width="14.5" height="184" fill="#4fa800"/><circle cx="642" cy="105" r="3" fill="#4fa800"/><circle cx="314" cy="209.29999999999995" r="29" fill="#4fa800"/><circle cx="636.5" cy="209.79999999999995" r="29" fill="#4fa800"/><rect x="551.5" y="274" width="24.2" height="60" fill="#4fa800"/><circle cx="566" cy="345.4" r="29" fill="#4fa800"/><rect x="325" y="137" width="121" height="143" fill="#4fa800"/><rect x="503" y="137" width="122" height="143" fill="#4fa800"/><rect x="324.9" y="137" width="1.2" height="143" fill="#a8d030"/><rect x="371.79999999999995" y="137" width="1.2" height="143" fill="#a8d030"/><rect x="578.1999999999999" y="137" width="1.2" height="143" fill="#a8d030"/><rect x="623.4" y="137" width="1.2" height="143" fill="#a8d030"/><rect x="551.5" y="280" width="24.2" height="1.2" fill="#a8d030"/><rect x="324.70000000000005" y="133" width="299.79999999999995" height="151.20000000000005" fill="none" stroke="#e02828" stroke-width="3"/><text x="460.5" y="213" font-family="Liberation Serif" font-weight="bold" font-size="17.5" fill="#e03030" letter-spacing="1.2">R8</text><rect x="501" y="206.79999999999995" width="80.5" height="5" rx="2.5" fill="#d8d4e4"/></svg>
<div class="t" style="left:328.5px;top:1015.8px;font-size:16.3px;font-family:'Liberation Mono',monospace;letter-spacing:0.018px;color:#202020;">X = 3.2686885", Y = 2.3585556"</div>
</body></html>
